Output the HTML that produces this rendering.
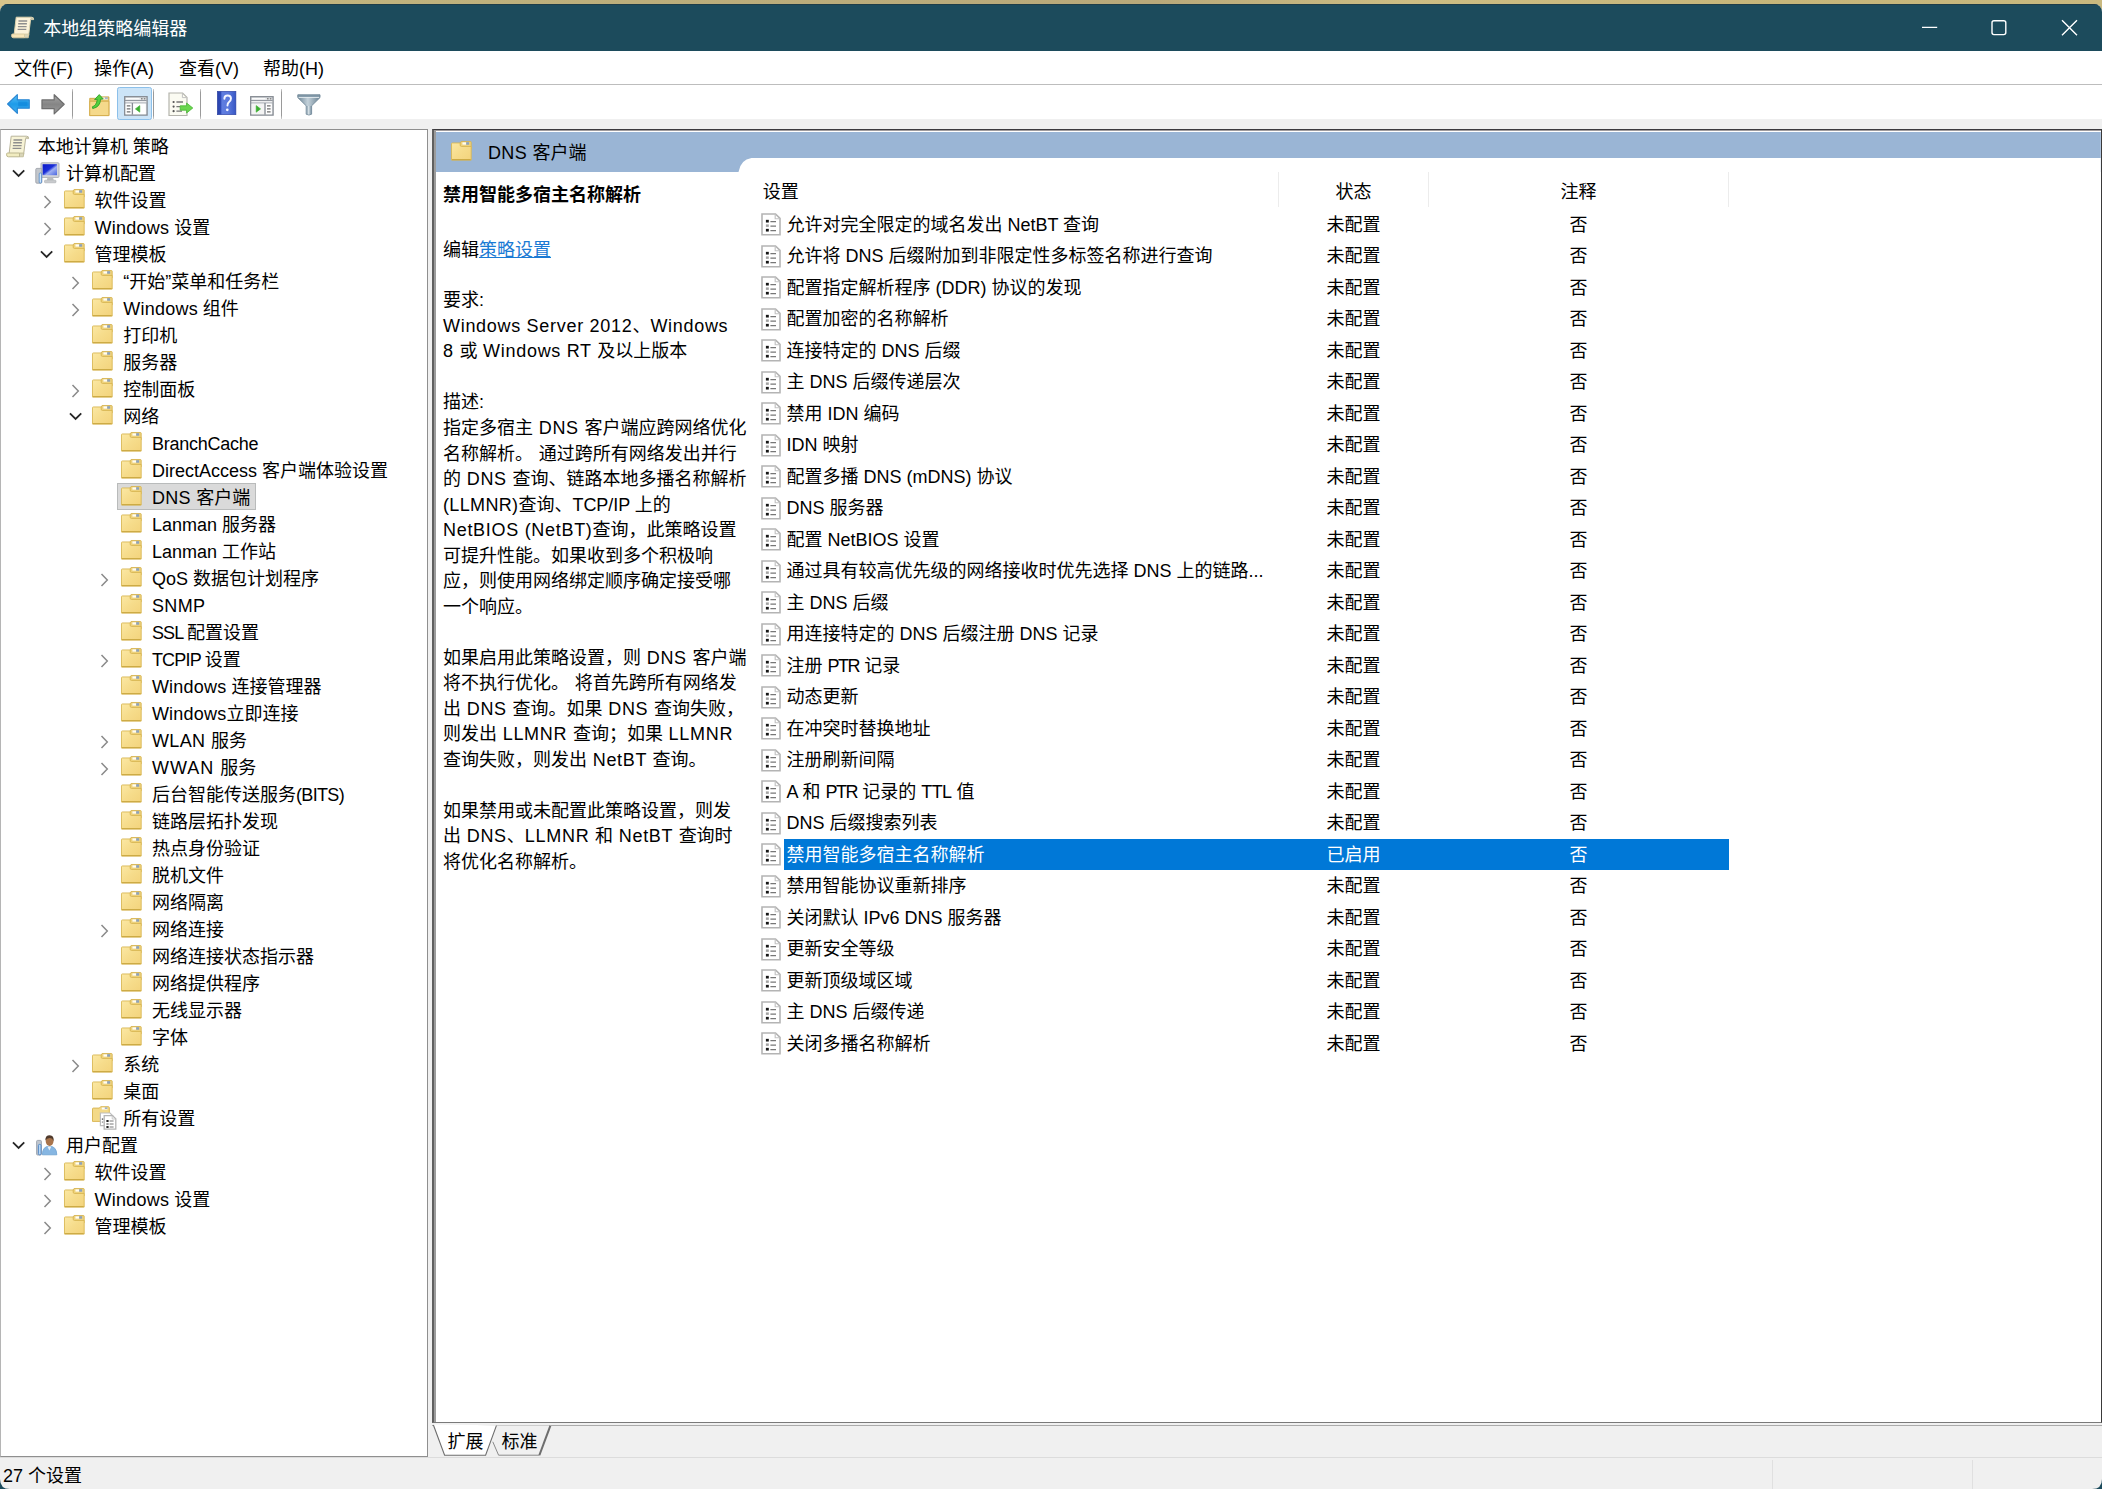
<!DOCTYPE html><html lang="zh-CN"><head><meta charset="utf-8"><title>本地组策略编辑器</title><style>
html,body{margin:0;padding:0}
body{width:2102px;height:1489px;overflow:hidden;position:relative;background:#1c4b5c;font-family:"Liberation Sans", "Noto Sans CJK SC", sans-serif;font-size:18px;color:#000}
div,svg{position:absolute}
.ic{overflow:visible}
#gold{left:0;top:0;width:2102px;height:14px;background:linear-gradient(90deg,#d8c58b 0%,#d6c489 4%,#c9b97f 8%,#c3b57e 14%,#bcae7b 30%,#b9a97a 55%,#cdbd83 67%,#c6b579 85%,#c9b97f 100%)}
#win{left:0;top:4px;width:2102px;height:1485px;background:#f0f0f0;border-radius:8px 8px 8px 8px;overflow:hidden}
#tb{left:0;top:0;width:2102px;height:47px;background:#1c4b5c;border-top:1px solid #1f3d48;box-sizing:border-box}
#title{left:43.2px;top:11.9px;line-height:27px;color:#fff;white-space:nowrap}
#menu{left:0;top:47px;width:2102px;height:33px;background:#fff}
.m{top:52.2px;line-height:27px;white-space:nowrap}
#mline{left:0;top:80px;width:2102px;height:1.4px;background:#bdbdbd}
#tool{left:0;top:81.4px;width:2102px;height:33.7px;background:#fff}
.sep{width:1.2px;background:linear-gradient(180deg,#cfcfcf 0,#9a9a9a 12%,#9a9a9a 88%,#cfcfcf 100%);top:85px;height:30.2px}
#treepane{left:0;top:125px;width:428.1px;height:1327.6px;background:#fff;border:1.3px solid #8f8f8f;box-sizing:border-box;border-left:1px solid #b5b5b5}
.t,.l,.d{white-space:nowrap;line-height:27px;height:27px}
.tsel{background:#dadada;border:1px solid #b9bbbb;box-sizing:border-box}
#rp{left:432px;top:128.8px;width:1670px;height:1294.6px;background:#fff;box-sizing:border-box;border-left:2px solid #606060;border-top:1.3px solid #3c3a3e;border-bottom:1.4px solid #7a7a7a;border-right:1.2px solid #3a3a3a}
#rpi{left:434px;top:130.1px;width:1666.8px;height:1291.9px;box-sizing:border-box;border-left:2px solid #9c9c9c;border-top:1.7px solid #a09c9e}
.lsel{background:#0078d7}
.w{color:#fff}
.c{text-align:center}
.b{font-weight:bold}
.ls{letter-spacing:0.7px}
.lnk{color:#1a7ad4;text-decoration:underline;text-decoration-thickness:1.4px;text-underline-offset:1.2px}
.hsep{width:1px;background:#ececec;top:172px;height:35px}
#status{left:0;top:1453px;width:2102px;height:32px;background:#f0f0f0;border-top:1px solid #dcdcdc;box-sizing:border-box}
.ssep{width:1px;background:#e0e0e0;top:1460px;height:30px}
</style></head><body>
<svg width="0" height="0" style="left:0;top:0"><defs><linearGradient id="fg" x1="0" y1="0" x2="1" y2="1"><stop offset="0" stop-color="#fbe8a4"/><stop offset="0.5" stop-color="#f6dc8b"/><stop offset="1" stop-color="#f3d37c"/></linearGradient></defs></svg>
<div id="gold"></div><div id="win">
<div id="tb"></div>
<svg class="ic" style="left:10.5px;top:11.6px" width="24" height="23" viewBox="0 0 24 23"><path d="M5.2 1.2 H20.5 Q23 1.2 22.6 3.6 H19.6 L17.6 19.5 H3 Z" fill="#fcf3da" stroke="#dcd2ad" stroke-width="1"/><path d="M19.8 1.4 Q22.8 1.4 22.4 4 H19.4Z" fill="#c9c5aa"/><path d="M7.5 5 H16.2 M7.2 7.8 H15.9 M6.9 10.6 H15.6 M6.6 13.4 H15.3" stroke="#8e8e8e" stroke-width="1.4"/><path d="M1.2 18 H13.5 V21.8 H2.4 Q0.6 21.8 0.6 19.9 Q0.6 18 1.2 18Z" fill="#f8e6b8" stroke="#d8caa0" stroke-width="1"/><path d="M13.5 18 H17.8 L17.3 21.8 H13.5Z" fill="#d8d4b8" stroke="#d8caa0" stroke-width="0.8"/></svg>
<div id="title">本地组策略编辑器</div>
<svg class="ic" style="left:1916px;top:10px" width="170" height="28" viewBox="0 0 170 28"><path d="M6 13.4 H21.2" stroke="#fff" stroke-width="1.3"/><rect x="76" y="6.8" width="13.8" height="13.8" rx="2" fill="none" stroke="#fff" stroke-width="1.4"/><path d="M146 6.2 L161 21.2 M161 6.2 L146 21.2" stroke="#fff" stroke-width="1.4"/></svg>
<div id="menu"></div><div id="mline"></div><div id="tool"></div>
<div class="m" style="left:14px">文件(F)</div>
<div class="m" style="left:94px">操作(A)</div>
<div class="m" style="left:179px">查看(V)</div>
<div class="m" style="left:263px">帮助(H)</div>
<svg class="ic" style="left:5.6px;top:89px" width="25.4" height="22" viewBox="0 0 27 24"><defs><linearGradient id="ba" x1="0" y1="0" x2="0" y2="1"><stop offset="0" stop-color="#5cc3f7"/><stop offset="0.5" stop-color="#1e9be9"/><stop offset="1" stop-color="#3fb0f1"/></linearGradient></defs><path d="M1.4 12 L12 1.8 V7.4 H25 V16.6 H12 V22.2Z" fill="url(#ba)" stroke="#2a86d3" stroke-width="1.3" stroke-linejoin="round"/><path d="M13 9.4 H23.2 V14.4 H13Z" fill="#0d7fd6" opacity="0.55"/></svg>
<svg class="ic" style="left:40.4px;top:88.6px" width="25.6" height="22.6" viewBox="0 0 27 24"><defs><linearGradient id="fa" x1="0" y1="0" x2="0" y2="1"><stop offset="0" stop-color="#a6a6a6"/><stop offset="0.5" stop-color="#858585"/><stop offset="1" stop-color="#9c9c9c"/></linearGradient></defs><path d="M25.6 12 L15 1.8 V7.4 H2 V16.6 H15 V22.2Z" fill="url(#fa)" stroke="#6e6e6e" stroke-width="1.3" stroke-linejoin="round"/></svg>
<div class="sep" style="left:72px"></div>
<svg class="ic" style="left:88.2px;top:89.9px" width="23.6" height="23" viewBox="0 0 24 24"><path d="M1.5 4.5 H10 L11.5 3 H21.5 V22.5 H1.5Z" fill="#e9c870" stroke="#cfa94a" stroke-width="1"/><rect x="14" y="3.6" width="6.4" height="2.2" fill="#f3f3f3"/><rect x="17.4" y="3.6" width="3" height="1.3" fill="#8c9cb8"/><path d="M1.5 7.5 H21.5 V22.5 H1.5Z" fill="#f5d98b" stroke="#d5ad4d" stroke-width="1"/><path d="M4.2 13.4 Q8.6 12 9.4 5.6 L6.6 5.8 L11.4 0.6 L15.6 5.2 L12.8 5.4 Q12.6 13.6 4.6 15.2Z" fill="#52cf3f" stroke="#2f9e26" stroke-width="0.9" stroke-linejoin="round"/></svg>
<div style="left:116.9px;top:83px;width:35px;height:32.5px;background:#cce4f7;border:1.3px solid #8cc0ea;border-radius:2.4px;box-sizing:border-box"></div>
<svg class="ic" style="left:123.5px;top:92px" width="24" height="20" viewBox="0 0 24 20"><rect x="0.7" y="0.7" width="22.4" height="18.4" fill="#e4e6e9" stroke="#858a92" stroke-width="1.3"/><path d="M2 2.7 H15.4" stroke="#fbfbfb" stroke-width="1.3"/><rect x="17" y="2" width="1.6" height="1.5" fill="#888"/><rect x="19.8" y="2" width="1.6" height="1.5" fill="#888"/><path d="M1 4.6 H22.6" stroke="#8b9099" stroke-width="1"/><path d="M1.6 5.8 H22.2" stroke="#f6f6f6" stroke-width="1"/><path d="M1 7 H22.6" stroke="#9a9fa8" stroke-width="0.9"/><rect x="1.6" y="7.6" width="6" height="10.6" fill="#fff"/><path d="M2.8 9.8 H6.4 M2.8 12.8 H6.4 M2.8 15.8 H6.4" stroke="#6f6f6f" stroke-width="1.2"/><rect x="9.2" y="7.6" width="12.6" height="10.6" fill="#fff"/><path d="M8.4 7 V18.6" stroke="#858a92" stroke-width="1.2"/><path d="M15.8 9.6 V16.2 L11.4 12.9Z" fill="#3cae31" stroke="#3cae31" stroke-width="0.6" stroke-linejoin="round"/></svg>
<div class="sep" style="left:152.8px"></div>
<svg class="ic" style="left:168px;top:87.5px" width="26" height="25" viewBox="0 0 26 25"><path d="M1 1 H14.6 L19 5.4 V23.5 H1Z" fill="#fbfbf2" stroke="#b4b4ac" stroke-width="1.2"/><path d="M14.4 1.2 V5.6 H18.8" fill="none" stroke="#c2c2c2" stroke-width="1"/><circle cx="5.6" cy="10" r="1.1" fill="#555"/><circle cx="5.6" cy="14.6" r="1.1" fill="#555"/><circle cx="5.6" cy="19.2" r="1.1" fill="#555"/><path d="M8.4 10 H15 M8.4 14.6 H12 M8.4 19.2 H14" stroke="#777" stroke-width="1.3"/><path d="M12.2 13.8 H18.6 V11 L24.8 16 L18.6 21 V18.2 H12.2Z" fill="#6ad64e" stroke="#48b534" stroke-width="0.8" stroke-linejoin="round"/></svg>
<div class="sep" style="left:200px"></div>
<svg class="ic" style="left:216.8px;top:87.2px" width="19.4" height="24" viewBox="0 0 20 24" preserveAspectRatio="none"><defs><linearGradient id="hb" x1="0" y1="0" x2="1" y2="0"><stop offset="0" stop-color="#2a43ad"/><stop offset="0.2" stop-color="#2f4bb8"/><stop offset="0.24" stop-color="#5f7de0"/><stop offset="0.6" stop-color="#5a78dc"/><stop offset="1" stop-color="#3656c4"/></linearGradient></defs><rect x="0.3" y="0.3" width="19.2" height="23.4" fill="url(#hb)" stroke="#2a3f9e" stroke-width="0.6"/><path d="M7.6 7.8 Q7.6 4.6 11 4.6 Q14.4 4.6 14.4 7.6 Q14.4 9.6 12.4 11 Q10.8 12.2 10.8 14.6" fill="none" stroke="#f4f6ff" stroke-width="2" stroke-linecap="round"/><circle cx="10.6" cy="18.8" r="1.4" fill="#f4f6ff"/></svg>
<svg class="ic" style="left:249.5px;top:92px" width="24" height="20" viewBox="0 0 24 20"><rect x="0.7" y="0.7" width="22.4" height="18.4" fill="#e4e6e9" stroke="#858a92" stroke-width="1.3"/><path d="M2 2.7 H15.4" stroke="#fbfbfb" stroke-width="1.3"/><rect x="17" y="2" width="1.6" height="1.5" fill="#888"/><rect x="19.8" y="2" width="1.6" height="1.5" fill="#888"/><path d="M1 4.6 H22.6" stroke="#8b9099" stroke-width="1"/><path d="M1.6 5.8 H22.2" stroke="#f6f6f6" stroke-width="1"/><path d="M1 7 H22.6" stroke="#9a9fa8" stroke-width="0.9"/><rect x="1.6" y="7.6" width="12.6" height="10.6" fill="#f4f4f4"/><rect x="15.8" y="7.6" width="6" height="10.6" fill="#fff"/><path d="M15 7 V18.6" stroke="#858a92" stroke-width="1.2"/><path d="M17 9.8 H20.6 M17 12.8 H20.6 M17 15.8 H20.6" stroke="#6f6f6f" stroke-width="1.2"/><path d="M6.2 9.6 V16.2 L10.6 12.9Z" fill="#3cae31" stroke="#3cae31" stroke-width="0.6" stroke-linejoin="round"/></svg>
<div class="sep" style="left:281px"></div>
<svg class="ic" style="left:297px;top:90px" width="24" height="22" viewBox="0 0 24 22"><defs><linearGradient id="fn" x1="0" y1="0" x2="1" y2="0"><stop offset="0" stop-color="#6f8797"/><stop offset="0.45" stop-color="#c3d1da"/><stop offset="1" stop-color="#6b8393"/></linearGradient><linearGradient id="fn2" x1="0" y1="0" x2="1" y2="0"><stop offset="0" stop-color="#8fa3b1"/><stop offset="0.4" stop-color="#dbe5ea"/><stop offset="1" stop-color="#8399a8"/></linearGradient></defs><path d="M0.8 0.8 H23 V3.6 L14.6 11.8 V20.2 Q12 21.8 9.2 20.2 V11.8 L0.8 3.6Z" fill="url(#fn)" stroke="#6e8696" stroke-width="0.9" stroke-linejoin="round"/><rect x="1.2" y="1" width="21.4" height="2.2" fill="#7d94a4"/><path d="M1.6 3.4 H22.2" stroke="#e3ebf0" stroke-width="1"/><rect x="10.2" y="12" width="3.6" height="8.4" fill="url(#fn2)"/></svg>
</div>
<div id="treepane" style="top:129px"></div>
<svg class="ic" style="left:6px;top:134.5px" width="24" height="23" viewBox="0 0 24 23"><path d="M5.2 1.2 H20.5 Q23 1.2 22.6 3.6 H19.6 L17.6 19.5 H3 Z" fill="#f7f3d6" stroke="#b9b49a" stroke-width="1"/><path d="M19.8 1.4 Q22.8 1.4 22.4 4 H19.4Z" fill="#c9c5aa"/><path d="M7.5 5 H16.2 M7.2 7.8 H15.9 M6.9 10.6 H15.6 M6.6 13.4 H15.3" stroke="#8e8e8e" stroke-width="1.4"/><path d="M1.2 18 H13.5 V21.8 H2.4 Q0.6 21.8 0.6 19.9 Q0.6 18 1.2 18Z" fill="#f1ecc0" stroke="#bdb78f" stroke-width="1"/><path d="M13.5 18 H17.8 L17.3 21.8 H13.5Z" fill="#d8d4b8" stroke="#bdb78f" stroke-width="0.8"/></svg>
<div class="t" style="left:37.8px;top:133.7px">本地计算机 策略</div>
<svg class="ic" style="left:11.8px;top:169.4px" width="13.2" height="8.5" viewBox="0 0 14 9"><path d="M1 1.5 L7 7.3 L13 1.5" fill="none" stroke="#262626" stroke-width="1.9"/></svg>
<svg class="ic" style="left:34.5px;top:162px" width="25" height="22" viewBox="0 0 25 22"><defs><linearGradient id="scr" x1="0" y1="0" x2="1" y2="1"><stop offset="0" stop-color="#0a18c8"/><stop offset="0.45" stop-color="#1b2fd8"/><stop offset="0.6" stop-color="#9fb0f2"/><stop offset="1" stop-color="#4a66e0"/></linearGradient></defs><rect x="6" y="0.8" width="18" height="14.6" rx="1" fill="#d4d6da" stroke="#aeb2b8" stroke-width="1"/><rect x="7.6" y="2.2" width="14.4" height="11" fill="url(#scr)"/><path d="M12.5 15.6 H18 L18.8 18.2 H11.7Z" fill="#b9bcc0"/><rect x="9.5" y="18.2" width="11.5" height="2.6" rx="0.8" fill="#c8cacd" stroke="#a9acb0" stroke-width="0.6"/><rect x="0.8" y="6.4" width="6" height="14.8" rx="1" fill="#c3c7cc" stroke="#9ea3aa" stroke-width="0.9"/><rect x="4.2" y="11" width="2.4" height="10" rx="1" fill="#cfe6fb" stroke="#4f88c8" stroke-width="0.8"/></svg>
<div class="t" style="left:66.0px;top:160.7px">计算机配置</div>
<svg class="ic" style="left:42.6px;top:194.8px" width="9" height="14" viewBox="0 0 9 14"><path d="M1.5 1 L7.3 7 L1.5 13" fill="none" stroke="#8a8a8a" stroke-width="1.5"/></svg>
<svg class="ic" style="left:63.5px;top:189.3px" width="20.7" height="19.6" viewBox="0 0 21 20" preserveAspectRatio="none"><path d="M9 2.4 L10.2 0.5 H19.7 Q20.5 0.5 20.5 1.3 V8 H9Z" fill="#eed27c" stroke="#d6b351" stroke-width="0.9"/><rect x="11.6" y="1.4" width="3.8" height="2.3" fill="#fffdf3"/><rect x="15.4" y="1.2" width="3" height="2.6" fill="#8da2bc"/><path d="M0.5 2.8 Q0.5 2 1.3 2 H9.3 V4.2 Q9.3 5.6 10.8 5.6 H20.5 V19.5 H0.5Z" fill="url(#fg)" stroke="#d8b653" stroke-width="0.9"/><path d="M1 19 H20" stroke="#cdab45" stroke-width="1.2"/></svg>
<div class="t" style="left:94.6px;top:187.7px">软件设置</div>
<svg class="ic" style="left:42.6px;top:221.8px" width="9" height="14" viewBox="0 0 9 14"><path d="M1.5 1 L7.3 7 L1.5 13" fill="none" stroke="#8a8a8a" stroke-width="1.5"/></svg>
<svg class="ic" style="left:63.5px;top:216.3px" width="20.7" height="19.6" viewBox="0 0 21 20" preserveAspectRatio="none"><path d="M9 2.4 L10.2 0.5 H19.7 Q20.5 0.5 20.5 1.3 V8 H9Z" fill="#eed27c" stroke="#d6b351" stroke-width="0.9"/><rect x="11.6" y="1.4" width="3.8" height="2.3" fill="#fffdf3"/><rect x="15.4" y="1.2" width="3" height="2.6" fill="#8da2bc"/><path d="M0.5 2.8 Q0.5 2 1.3 2 H9.3 V4.2 Q9.3 5.6 10.8 5.6 H20.5 V19.5 H0.5Z" fill="url(#fg)" stroke="#d8b653" stroke-width="0.9"/><path d="M1 19 H20" stroke="#cdab45" stroke-width="1.2"/></svg>
<div class="t" style="left:94.6px;top:214.7px"><span style="letter-spacing:0.22px">Windows</span> 设置</div>
<svg class="ic" style="left:40.4px;top:250.4px" width="13.2" height="8.5" viewBox="0 0 14 9"><path d="M1 1.5 L7 7.3 L13 1.5" fill="none" stroke="#262626" stroke-width="1.9"/></svg>
<svg class="ic" style="left:63.5px;top:243.3px" width="20.7" height="19.6" viewBox="0 0 21 20" preserveAspectRatio="none"><path d="M9 2.4 L10.2 0.5 H19.7 Q20.5 0.5 20.5 1.3 V8 H9Z" fill="#eed27c" stroke="#d6b351" stroke-width="0.9"/><rect x="11.6" y="1.4" width="3.8" height="2.3" fill="#fffdf3"/><rect x="15.4" y="1.2" width="3" height="2.6" fill="#8da2bc"/><path d="M0.5 2.8 Q0.5 2 1.3 2 H9.3 V4.2 Q9.3 5.6 10.8 5.6 H20.5 V19.5 H0.5Z" fill="url(#fg)" stroke="#d8b653" stroke-width="0.9"/><path d="M1 19 H20" stroke="#cdab45" stroke-width="1.2"/></svg>
<div class="t" style="left:94.6px;top:241.7px">管理模板</div>
<svg class="ic" style="left:71.3px;top:275.8px" width="9" height="14" viewBox="0 0 9 14"><path d="M1.5 1 L7.3 7 L1.5 13" fill="none" stroke="#8a8a8a" stroke-width="1.5"/></svg>
<svg class="ic" style="left:92.2px;top:270.3px" width="20.7" height="19.6" viewBox="0 0 21 20" preserveAspectRatio="none"><path d="M9 2.4 L10.2 0.5 H19.7 Q20.5 0.5 20.5 1.3 V8 H9Z" fill="#eed27c" stroke="#d6b351" stroke-width="0.9"/><rect x="11.6" y="1.4" width="3.8" height="2.3" fill="#fffdf3"/><rect x="15.4" y="1.2" width="3" height="2.6" fill="#8da2bc"/><path d="M0.5 2.8 Q0.5 2 1.3 2 H9.3 V4.2 Q9.3 5.6 10.8 5.6 H20.5 V19.5 H0.5Z" fill="url(#fg)" stroke="#d8b653" stroke-width="0.9"/><path d="M1 19 H20" stroke="#cdab45" stroke-width="1.2"/></svg>
<div class="t" style="left:123.3px;top:268.7px">“开始”菜单和任务栏</div>
<svg class="ic" style="left:71.3px;top:302.8px" width="9" height="14" viewBox="0 0 9 14"><path d="M1.5 1 L7.3 7 L1.5 13" fill="none" stroke="#8a8a8a" stroke-width="1.5"/></svg>
<svg class="ic" style="left:92.2px;top:297.3px" width="20.7" height="19.6" viewBox="0 0 21 20" preserveAspectRatio="none"><path d="M9 2.4 L10.2 0.5 H19.7 Q20.5 0.5 20.5 1.3 V8 H9Z" fill="#eed27c" stroke="#d6b351" stroke-width="0.9"/><rect x="11.6" y="1.4" width="3.8" height="2.3" fill="#fffdf3"/><rect x="15.4" y="1.2" width="3" height="2.6" fill="#8da2bc"/><path d="M0.5 2.8 Q0.5 2 1.3 2 H9.3 V4.2 Q9.3 5.6 10.8 5.6 H20.5 V19.5 H0.5Z" fill="url(#fg)" stroke="#d8b653" stroke-width="0.9"/><path d="M1 19 H20" stroke="#cdab45" stroke-width="1.2"/></svg>
<div class="t" style="left:123.3px;top:295.7px"><span style="letter-spacing:0.22px">Windows</span> 组件</div>
<svg class="ic" style="left:92.2px;top:324.3px" width="20.7" height="19.6" viewBox="0 0 21 20" preserveAspectRatio="none"><path d="M9 2.4 L10.2 0.5 H19.7 Q20.5 0.5 20.5 1.3 V8 H9Z" fill="#eed27c" stroke="#d6b351" stroke-width="0.9"/><rect x="11.6" y="1.4" width="3.8" height="2.3" fill="#fffdf3"/><rect x="15.4" y="1.2" width="3" height="2.6" fill="#8da2bc"/><path d="M0.5 2.8 Q0.5 2 1.3 2 H9.3 V4.2 Q9.3 5.6 10.8 5.6 H20.5 V19.5 H0.5Z" fill="url(#fg)" stroke="#d8b653" stroke-width="0.9"/><path d="M1 19 H20" stroke="#cdab45" stroke-width="1.2"/></svg>
<div class="t" style="left:123.3px;top:322.7px">打印机</div>
<svg class="ic" style="left:92.2px;top:351.3px" width="20.7" height="19.6" viewBox="0 0 21 20" preserveAspectRatio="none"><path d="M9 2.4 L10.2 0.5 H19.7 Q20.5 0.5 20.5 1.3 V8 H9Z" fill="#eed27c" stroke="#d6b351" stroke-width="0.9"/><rect x="11.6" y="1.4" width="3.8" height="2.3" fill="#fffdf3"/><rect x="15.4" y="1.2" width="3" height="2.6" fill="#8da2bc"/><path d="M0.5 2.8 Q0.5 2 1.3 2 H9.3 V4.2 Q9.3 5.6 10.8 5.6 H20.5 V19.5 H0.5Z" fill="url(#fg)" stroke="#d8b653" stroke-width="0.9"/><path d="M1 19 H20" stroke="#cdab45" stroke-width="1.2"/></svg>
<div class="t" style="left:123.3px;top:349.7px">服务器</div>
<svg class="ic" style="left:71.3px;top:383.8px" width="9" height="14" viewBox="0 0 9 14"><path d="M1.5 1 L7.3 7 L1.5 13" fill="none" stroke="#8a8a8a" stroke-width="1.5"/></svg>
<svg class="ic" style="left:92.2px;top:378.3px" width="20.7" height="19.6" viewBox="0 0 21 20" preserveAspectRatio="none"><path d="M9 2.4 L10.2 0.5 H19.7 Q20.5 0.5 20.5 1.3 V8 H9Z" fill="#eed27c" stroke="#d6b351" stroke-width="0.9"/><rect x="11.6" y="1.4" width="3.8" height="2.3" fill="#fffdf3"/><rect x="15.4" y="1.2" width="3" height="2.6" fill="#8da2bc"/><path d="M0.5 2.8 Q0.5 2 1.3 2 H9.3 V4.2 Q9.3 5.6 10.8 5.6 H20.5 V19.5 H0.5Z" fill="url(#fg)" stroke="#d8b653" stroke-width="0.9"/><path d="M1 19 H20" stroke="#cdab45" stroke-width="1.2"/></svg>
<div class="t" style="left:123.3px;top:376.7px">控制面板</div>
<svg class="ic" style="left:69.1px;top:412.4px" width="13.2" height="8.5" viewBox="0 0 14 9"><path d="M1 1.5 L7 7.3 L13 1.5" fill="none" stroke="#262626" stroke-width="1.9"/></svg>
<svg class="ic" style="left:92.2px;top:405.3px" width="20.7" height="19.6" viewBox="0 0 21 20" preserveAspectRatio="none"><path d="M9 2.4 L10.2 0.5 H19.7 Q20.5 0.5 20.5 1.3 V8 H9Z" fill="#eed27c" stroke="#d6b351" stroke-width="0.9"/><rect x="11.6" y="1.4" width="3.8" height="2.3" fill="#fffdf3"/><rect x="15.4" y="1.2" width="3" height="2.6" fill="#8da2bc"/><path d="M0.5 2.8 Q0.5 2 1.3 2 H9.3 V4.2 Q9.3 5.6 10.8 5.6 H20.5 V19.5 H0.5Z" fill="url(#fg)" stroke="#d8b653" stroke-width="0.9"/><path d="M1 19 H20" stroke="#cdab45" stroke-width="1.2"/></svg>
<div class="t" style="left:123.3px;top:403.7px">网络</div>
<svg class="ic" style="left:120.8px;top:432.3px" width="20.7" height="19.6" viewBox="0 0 21 20" preserveAspectRatio="none"><path d="M9 2.4 L10.2 0.5 H19.7 Q20.5 0.5 20.5 1.3 V8 H9Z" fill="#eed27c" stroke="#d6b351" stroke-width="0.9"/><rect x="11.6" y="1.4" width="3.8" height="2.3" fill="#fffdf3"/><rect x="15.4" y="1.2" width="3" height="2.6" fill="#8da2bc"/><path d="M0.5 2.8 Q0.5 2 1.3 2 H9.3 V4.2 Q9.3 5.6 10.8 5.6 H20.5 V19.5 H0.5Z" fill="url(#fg)" stroke="#d8b653" stroke-width="0.9"/><path d="M1 19 H20" stroke="#cdab45" stroke-width="1.2"/></svg>
<div class="t" style="left:151.9px;top:430.7px"><span style="letter-spacing:-0.25px">BranchCache</span></div>
<svg class="ic" style="left:120.8px;top:459.3px" width="20.7" height="19.6" viewBox="0 0 21 20" preserveAspectRatio="none"><path d="M9 2.4 L10.2 0.5 H19.7 Q20.5 0.5 20.5 1.3 V8 H9Z" fill="#eed27c" stroke="#d6b351" stroke-width="0.9"/><rect x="11.6" y="1.4" width="3.8" height="2.3" fill="#fffdf3"/><rect x="15.4" y="1.2" width="3" height="2.6" fill="#8da2bc"/><path d="M0.5 2.8 Q0.5 2 1.3 2 H9.3 V4.2 Q9.3 5.6 10.8 5.6 H20.5 V19.5 H0.5Z" fill="url(#fg)" stroke="#d8b653" stroke-width="0.9"/><path d="M1 19 H20" stroke="#cdab45" stroke-width="1.2"/></svg>
<div class="t" style="left:151.9px;top:457.7px">DirectAccess 客户端体验设置</div>
<div class="tsel" style="left:117.0px;top:483.1px;width:138.6px;height:26.6px"></div>
<svg class="ic" style="left:120.8px;top:486.3px" width="20.7" height="19.6" viewBox="0 0 21 20" preserveAspectRatio="none"><path d="M9 2.4 L10.2 0.5 H19.7 Q20.5 0.5 20.5 1.3 V8 H9Z" fill="#eed27c" stroke="#d6b351" stroke-width="0.9"/><rect x="11.6" y="1.4" width="3.8" height="2.3" fill="#fffdf3"/><rect x="15.4" y="1.2" width="3" height="2.6" fill="#8da2bc"/><path d="M0.5 2.8 Q0.5 2 1.3 2 H9.3 V4.2 Q9.3 5.6 10.8 5.6 H20.5 V19.5 H0.5Z" fill="url(#fg)" stroke="#d8b653" stroke-width="0.9"/><path d="M1 19 H20" stroke="#cdab45" stroke-width="1.2"/></svg>
<div class="t" style="left:151.9px;top:484.7px"><span style="letter-spacing:0.35px">DNS </span>客户端</div>
<svg class="ic" style="left:120.8px;top:513.3px" width="20.7" height="19.6" viewBox="0 0 21 20" preserveAspectRatio="none"><path d="M9 2.4 L10.2 0.5 H19.7 Q20.5 0.5 20.5 1.3 V8 H9Z" fill="#eed27c" stroke="#d6b351" stroke-width="0.9"/><rect x="11.6" y="1.4" width="3.8" height="2.3" fill="#fffdf3"/><rect x="15.4" y="1.2" width="3" height="2.6" fill="#8da2bc"/><path d="M0.5 2.8 Q0.5 2 1.3 2 H9.3 V4.2 Q9.3 5.6 10.8 5.6 H20.5 V19.5 H0.5Z" fill="url(#fg)" stroke="#d8b653" stroke-width="0.9"/><path d="M1 19 H20" stroke="#cdab45" stroke-width="1.2"/></svg>
<div class="t" style="left:151.9px;top:511.7px">Lanman 服务器</div>
<svg class="ic" style="left:120.8px;top:540.3px" width="20.7" height="19.6" viewBox="0 0 21 20" preserveAspectRatio="none"><path d="M9 2.4 L10.2 0.5 H19.7 Q20.5 0.5 20.5 1.3 V8 H9Z" fill="#eed27c" stroke="#d6b351" stroke-width="0.9"/><rect x="11.6" y="1.4" width="3.8" height="2.3" fill="#fffdf3"/><rect x="15.4" y="1.2" width="3" height="2.6" fill="#8da2bc"/><path d="M0.5 2.8 Q0.5 2 1.3 2 H9.3 V4.2 Q9.3 5.6 10.8 5.6 H20.5 V19.5 H0.5Z" fill="url(#fg)" stroke="#d8b653" stroke-width="0.9"/><path d="M1 19 H20" stroke="#cdab45" stroke-width="1.2"/></svg>
<div class="t" style="left:151.9px;top:538.7px">Lanman 工作站</div>
<svg class="ic" style="left:99.9px;top:572.8px" width="9" height="14" viewBox="0 0 9 14"><path d="M1.5 1 L7.3 7 L1.5 13" fill="none" stroke="#8a8a8a" stroke-width="1.5"/></svg>
<svg class="ic" style="left:120.8px;top:567.3px" width="20.7" height="19.6" viewBox="0 0 21 20" preserveAspectRatio="none"><path d="M9 2.4 L10.2 0.5 H19.7 Q20.5 0.5 20.5 1.3 V8 H9Z" fill="#eed27c" stroke="#d6b351" stroke-width="0.9"/><rect x="11.6" y="1.4" width="3.8" height="2.3" fill="#fffdf3"/><rect x="15.4" y="1.2" width="3" height="2.6" fill="#8da2bc"/><path d="M0.5 2.8 Q0.5 2 1.3 2 H9.3 V4.2 Q9.3 5.6 10.8 5.6 H20.5 V19.5 H0.5Z" fill="url(#fg)" stroke="#d8b653" stroke-width="0.9"/><path d="M1 19 H20" stroke="#cdab45" stroke-width="1.2"/></svg>
<div class="t" style="left:151.9px;top:565.7px">QoS 数据包计划程序</div>
<svg class="ic" style="left:120.8px;top:594.3px" width="20.7" height="19.6" viewBox="0 0 21 20" preserveAspectRatio="none"><path d="M9 2.4 L10.2 0.5 H19.7 Q20.5 0.5 20.5 1.3 V8 H9Z" fill="#eed27c" stroke="#d6b351" stroke-width="0.9"/><rect x="11.6" y="1.4" width="3.8" height="2.3" fill="#fffdf3"/><rect x="15.4" y="1.2" width="3" height="2.6" fill="#8da2bc"/><path d="M0.5 2.8 Q0.5 2 1.3 2 H9.3 V4.2 Q9.3 5.6 10.8 5.6 H20.5 V19.5 H0.5Z" fill="url(#fg)" stroke="#d8b653" stroke-width="0.9"/><path d="M1 19 H20" stroke="#cdab45" stroke-width="1.2"/></svg>
<div class="t" style="left:151.9px;top:592.7px"><span style="letter-spacing:0.4px">SNMP</span></div>
<svg class="ic" style="left:120.8px;top:621.3px" width="20.7" height="19.6" viewBox="0 0 21 20" preserveAspectRatio="none"><path d="M9 2.4 L10.2 0.5 H19.7 Q20.5 0.5 20.5 1.3 V8 H9Z" fill="#eed27c" stroke="#d6b351" stroke-width="0.9"/><rect x="11.6" y="1.4" width="3.8" height="2.3" fill="#fffdf3"/><rect x="15.4" y="1.2" width="3" height="2.6" fill="#8da2bc"/><path d="M0.5 2.8 Q0.5 2 1.3 2 H9.3 V4.2 Q9.3 5.6 10.8 5.6 H20.5 V19.5 H0.5Z" fill="url(#fg)" stroke="#d8b653" stroke-width="0.9"/><path d="M1 19 H20" stroke="#cdab45" stroke-width="1.2"/></svg>
<div class="t" style="left:151.9px;top:619.7px"><span style="letter-spacing:-0.8px">SSL </span>配置设置</div>
<svg class="ic" style="left:99.9px;top:653.8px" width="9" height="14" viewBox="0 0 9 14"><path d="M1.5 1 L7.3 7 L1.5 13" fill="none" stroke="#8a8a8a" stroke-width="1.5"/></svg>
<svg class="ic" style="left:120.8px;top:648.3px" width="20.7" height="19.6" viewBox="0 0 21 20" preserveAspectRatio="none"><path d="M9 2.4 L10.2 0.5 H19.7 Q20.5 0.5 20.5 1.3 V8 H9Z" fill="#eed27c" stroke="#d6b351" stroke-width="0.9"/><rect x="11.6" y="1.4" width="3.8" height="2.3" fill="#fffdf3"/><rect x="15.4" y="1.2" width="3" height="2.6" fill="#8da2bc"/><path d="M0.5 2.8 Q0.5 2 1.3 2 H9.3 V4.2 Q9.3 5.6 10.8 5.6 H20.5 V19.5 H0.5Z" fill="url(#fg)" stroke="#d8b653" stroke-width="0.9"/><path d="M1 19 H20" stroke="#cdab45" stroke-width="1.2"/></svg>
<div class="t" style="left:151.9px;top:646.7px"><span style="letter-spacing:-0.8px">TCPIP </span>设置</div>
<svg class="ic" style="left:120.8px;top:675.3px" width="20.7" height="19.6" viewBox="0 0 21 20" preserveAspectRatio="none"><path d="M9 2.4 L10.2 0.5 H19.7 Q20.5 0.5 20.5 1.3 V8 H9Z" fill="#eed27c" stroke="#d6b351" stroke-width="0.9"/><rect x="11.6" y="1.4" width="3.8" height="2.3" fill="#fffdf3"/><rect x="15.4" y="1.2" width="3" height="2.6" fill="#8da2bc"/><path d="M0.5 2.8 Q0.5 2 1.3 2 H9.3 V4.2 Q9.3 5.6 10.8 5.6 H20.5 V19.5 H0.5Z" fill="url(#fg)" stroke="#d8b653" stroke-width="0.9"/><path d="M1 19 H20" stroke="#cdab45" stroke-width="1.2"/></svg>
<div class="t" style="left:151.9px;top:673.7px"><span style="letter-spacing:0.22px">Windows</span> 连接管理器</div>
<svg class="ic" style="left:120.8px;top:702.3px" width="20.7" height="19.6" viewBox="0 0 21 20" preserveAspectRatio="none"><path d="M9 2.4 L10.2 0.5 H19.7 Q20.5 0.5 20.5 1.3 V8 H9Z" fill="#eed27c" stroke="#d6b351" stroke-width="0.9"/><rect x="11.6" y="1.4" width="3.8" height="2.3" fill="#fffdf3"/><rect x="15.4" y="1.2" width="3" height="2.6" fill="#8da2bc"/><path d="M0.5 2.8 Q0.5 2 1.3 2 H9.3 V4.2 Q9.3 5.6 10.8 5.6 H20.5 V19.5 H0.5Z" fill="url(#fg)" stroke="#d8b653" stroke-width="0.9"/><path d="M1 19 H20" stroke="#cdab45" stroke-width="1.2"/></svg>
<div class="t" style="left:151.9px;top:700.7px"><span style="letter-spacing:0.22px">Windows</span>立即连接</div>
<svg class="ic" style="left:99.9px;top:734.8px" width="9" height="14" viewBox="0 0 9 14"><path d="M1.5 1 L7.3 7 L1.5 13" fill="none" stroke="#8a8a8a" stroke-width="1.5"/></svg>
<svg class="ic" style="left:120.8px;top:729.3px" width="20.7" height="19.6" viewBox="0 0 21 20" preserveAspectRatio="none"><path d="M9 2.4 L10.2 0.5 H19.7 Q20.5 0.5 20.5 1.3 V8 H9Z" fill="#eed27c" stroke="#d6b351" stroke-width="0.9"/><rect x="11.6" y="1.4" width="3.8" height="2.3" fill="#fffdf3"/><rect x="15.4" y="1.2" width="3" height="2.6" fill="#8da2bc"/><path d="M0.5 2.8 Q0.5 2 1.3 2 H9.3 V4.2 Q9.3 5.6 10.8 5.6 H20.5 V19.5 H0.5Z" fill="url(#fg)" stroke="#d8b653" stroke-width="0.9"/><path d="M1 19 H20" stroke="#cdab45" stroke-width="1.2"/></svg>
<div class="t" style="left:151.9px;top:727.7px"><span style="letter-spacing:0.4px">WLAN </span>服务</div>
<svg class="ic" style="left:99.9px;top:761.8px" width="9" height="14" viewBox="0 0 9 14"><path d="M1.5 1 L7.3 7 L1.5 13" fill="none" stroke="#8a8a8a" stroke-width="1.5"/></svg>
<svg class="ic" style="left:120.8px;top:756.3px" width="20.7" height="19.6" viewBox="0 0 21 20" preserveAspectRatio="none"><path d="M9 2.4 L10.2 0.5 H19.7 Q20.5 0.5 20.5 1.3 V8 H9Z" fill="#eed27c" stroke="#d6b351" stroke-width="0.9"/><rect x="11.6" y="1.4" width="3.8" height="2.3" fill="#fffdf3"/><rect x="15.4" y="1.2" width="3" height="2.6" fill="#8da2bc"/><path d="M0.5 2.8 Q0.5 2 1.3 2 H9.3 V4.2 Q9.3 5.6 10.8 5.6 H20.5 V19.5 H0.5Z" fill="url(#fg)" stroke="#d8b653" stroke-width="0.9"/><path d="M1 19 H20" stroke="#cdab45" stroke-width="1.2"/></svg>
<div class="t" style="left:151.9px;top:754.7px"><span style="letter-spacing:1.0px">WWAN </span>服务</div>
<svg class="ic" style="left:120.8px;top:783.3px" width="20.7" height="19.6" viewBox="0 0 21 20" preserveAspectRatio="none"><path d="M9 2.4 L10.2 0.5 H19.7 Q20.5 0.5 20.5 1.3 V8 H9Z" fill="#eed27c" stroke="#d6b351" stroke-width="0.9"/><rect x="11.6" y="1.4" width="3.8" height="2.3" fill="#fffdf3"/><rect x="15.4" y="1.2" width="3" height="2.6" fill="#8da2bc"/><path d="M0.5 2.8 Q0.5 2 1.3 2 H9.3 V4.2 Q9.3 5.6 10.8 5.6 H20.5 V19.5 H0.5Z" fill="url(#fg)" stroke="#d8b653" stroke-width="0.9"/><path d="M1 19 H20" stroke="#cdab45" stroke-width="1.2"/></svg>
<div class="t" style="left:151.9px;top:781.7px">后台智能传送服务<span style="letter-spacing:-0.63px">(BITS)</span></div>
<svg class="ic" style="left:120.8px;top:810.3px" width="20.7" height="19.6" viewBox="0 0 21 20" preserveAspectRatio="none"><path d="M9 2.4 L10.2 0.5 H19.7 Q20.5 0.5 20.5 1.3 V8 H9Z" fill="#eed27c" stroke="#d6b351" stroke-width="0.9"/><rect x="11.6" y="1.4" width="3.8" height="2.3" fill="#fffdf3"/><rect x="15.4" y="1.2" width="3" height="2.6" fill="#8da2bc"/><path d="M0.5 2.8 Q0.5 2 1.3 2 H9.3 V4.2 Q9.3 5.6 10.8 5.6 H20.5 V19.5 H0.5Z" fill="url(#fg)" stroke="#d8b653" stroke-width="0.9"/><path d="M1 19 H20" stroke="#cdab45" stroke-width="1.2"/></svg>
<div class="t" style="left:151.9px;top:808.7px">链路层拓扑发现</div>
<svg class="ic" style="left:120.8px;top:837.3px" width="20.7" height="19.6" viewBox="0 0 21 20" preserveAspectRatio="none"><path d="M9 2.4 L10.2 0.5 H19.7 Q20.5 0.5 20.5 1.3 V8 H9Z" fill="#eed27c" stroke="#d6b351" stroke-width="0.9"/><rect x="11.6" y="1.4" width="3.8" height="2.3" fill="#fffdf3"/><rect x="15.4" y="1.2" width="3" height="2.6" fill="#8da2bc"/><path d="M0.5 2.8 Q0.5 2 1.3 2 H9.3 V4.2 Q9.3 5.6 10.8 5.6 H20.5 V19.5 H0.5Z" fill="url(#fg)" stroke="#d8b653" stroke-width="0.9"/><path d="M1 19 H20" stroke="#cdab45" stroke-width="1.2"/></svg>
<div class="t" style="left:151.9px;top:835.7px">热点身份验证</div>
<svg class="ic" style="left:120.8px;top:864.3px" width="20.7" height="19.6" viewBox="0 0 21 20" preserveAspectRatio="none"><path d="M9 2.4 L10.2 0.5 H19.7 Q20.5 0.5 20.5 1.3 V8 H9Z" fill="#eed27c" stroke="#d6b351" stroke-width="0.9"/><rect x="11.6" y="1.4" width="3.8" height="2.3" fill="#fffdf3"/><rect x="15.4" y="1.2" width="3" height="2.6" fill="#8da2bc"/><path d="M0.5 2.8 Q0.5 2 1.3 2 H9.3 V4.2 Q9.3 5.6 10.8 5.6 H20.5 V19.5 H0.5Z" fill="url(#fg)" stroke="#d8b653" stroke-width="0.9"/><path d="M1 19 H20" stroke="#cdab45" stroke-width="1.2"/></svg>
<div class="t" style="left:151.9px;top:862.7px">脱机文件</div>
<svg class="ic" style="left:120.8px;top:891.3px" width="20.7" height="19.6" viewBox="0 0 21 20" preserveAspectRatio="none"><path d="M9 2.4 L10.2 0.5 H19.7 Q20.5 0.5 20.5 1.3 V8 H9Z" fill="#eed27c" stroke="#d6b351" stroke-width="0.9"/><rect x="11.6" y="1.4" width="3.8" height="2.3" fill="#fffdf3"/><rect x="15.4" y="1.2" width="3" height="2.6" fill="#8da2bc"/><path d="M0.5 2.8 Q0.5 2 1.3 2 H9.3 V4.2 Q9.3 5.6 10.8 5.6 H20.5 V19.5 H0.5Z" fill="url(#fg)" stroke="#d8b653" stroke-width="0.9"/><path d="M1 19 H20" stroke="#cdab45" stroke-width="1.2"/></svg>
<div class="t" style="left:151.9px;top:889.7px">网络隔离</div>
<svg class="ic" style="left:99.9px;top:923.8px" width="9" height="14" viewBox="0 0 9 14"><path d="M1.5 1 L7.3 7 L1.5 13" fill="none" stroke="#8a8a8a" stroke-width="1.5"/></svg>
<svg class="ic" style="left:120.8px;top:918.3px" width="20.7" height="19.6" viewBox="0 0 21 20" preserveAspectRatio="none"><path d="M9 2.4 L10.2 0.5 H19.7 Q20.5 0.5 20.5 1.3 V8 H9Z" fill="#eed27c" stroke="#d6b351" stroke-width="0.9"/><rect x="11.6" y="1.4" width="3.8" height="2.3" fill="#fffdf3"/><rect x="15.4" y="1.2" width="3" height="2.6" fill="#8da2bc"/><path d="M0.5 2.8 Q0.5 2 1.3 2 H9.3 V4.2 Q9.3 5.6 10.8 5.6 H20.5 V19.5 H0.5Z" fill="url(#fg)" stroke="#d8b653" stroke-width="0.9"/><path d="M1 19 H20" stroke="#cdab45" stroke-width="1.2"/></svg>
<div class="t" style="left:151.9px;top:916.7px">网络连接</div>
<svg class="ic" style="left:120.8px;top:945.3px" width="20.7" height="19.6" viewBox="0 0 21 20" preserveAspectRatio="none"><path d="M9 2.4 L10.2 0.5 H19.7 Q20.5 0.5 20.5 1.3 V8 H9Z" fill="#eed27c" stroke="#d6b351" stroke-width="0.9"/><rect x="11.6" y="1.4" width="3.8" height="2.3" fill="#fffdf3"/><rect x="15.4" y="1.2" width="3" height="2.6" fill="#8da2bc"/><path d="M0.5 2.8 Q0.5 2 1.3 2 H9.3 V4.2 Q9.3 5.6 10.8 5.6 H20.5 V19.5 H0.5Z" fill="url(#fg)" stroke="#d8b653" stroke-width="0.9"/><path d="M1 19 H20" stroke="#cdab45" stroke-width="1.2"/></svg>
<div class="t" style="left:151.9px;top:943.7px">网络连接状态指示器</div>
<svg class="ic" style="left:120.8px;top:972.3px" width="20.7" height="19.6" viewBox="0 0 21 20" preserveAspectRatio="none"><path d="M9 2.4 L10.2 0.5 H19.7 Q20.5 0.5 20.5 1.3 V8 H9Z" fill="#eed27c" stroke="#d6b351" stroke-width="0.9"/><rect x="11.6" y="1.4" width="3.8" height="2.3" fill="#fffdf3"/><rect x="15.4" y="1.2" width="3" height="2.6" fill="#8da2bc"/><path d="M0.5 2.8 Q0.5 2 1.3 2 H9.3 V4.2 Q9.3 5.6 10.8 5.6 H20.5 V19.5 H0.5Z" fill="url(#fg)" stroke="#d8b653" stroke-width="0.9"/><path d="M1 19 H20" stroke="#cdab45" stroke-width="1.2"/></svg>
<div class="t" style="left:151.9px;top:970.7px">网络提供程序</div>
<svg class="ic" style="left:120.8px;top:999.3px" width="20.7" height="19.6" viewBox="0 0 21 20" preserveAspectRatio="none"><path d="M9 2.4 L10.2 0.5 H19.7 Q20.5 0.5 20.5 1.3 V8 H9Z" fill="#eed27c" stroke="#d6b351" stroke-width="0.9"/><rect x="11.6" y="1.4" width="3.8" height="2.3" fill="#fffdf3"/><rect x="15.4" y="1.2" width="3" height="2.6" fill="#8da2bc"/><path d="M0.5 2.8 Q0.5 2 1.3 2 H9.3 V4.2 Q9.3 5.6 10.8 5.6 H20.5 V19.5 H0.5Z" fill="url(#fg)" stroke="#d8b653" stroke-width="0.9"/><path d="M1 19 H20" stroke="#cdab45" stroke-width="1.2"/></svg>
<div class="t" style="left:151.9px;top:997.7px">无线显示器</div>
<svg class="ic" style="left:120.8px;top:1026.3px" width="20.7" height="19.6" viewBox="0 0 21 20" preserveAspectRatio="none"><path d="M9 2.4 L10.2 0.5 H19.7 Q20.5 0.5 20.5 1.3 V8 H9Z" fill="#eed27c" stroke="#d6b351" stroke-width="0.9"/><rect x="11.6" y="1.4" width="3.8" height="2.3" fill="#fffdf3"/><rect x="15.4" y="1.2" width="3" height="2.6" fill="#8da2bc"/><path d="M0.5 2.8 Q0.5 2 1.3 2 H9.3 V4.2 Q9.3 5.6 10.8 5.6 H20.5 V19.5 H0.5Z" fill="url(#fg)" stroke="#d8b653" stroke-width="0.9"/><path d="M1 19 H20" stroke="#cdab45" stroke-width="1.2"/></svg>
<div class="t" style="left:151.9px;top:1024.7px">字体</div>
<svg class="ic" style="left:71.3px;top:1058.8px" width="9" height="14" viewBox="0 0 9 14"><path d="M1.5 1 L7.3 7 L1.5 13" fill="none" stroke="#8a8a8a" stroke-width="1.5"/></svg>
<svg class="ic" style="left:92.2px;top:1053.3px" width="20.7" height="19.6" viewBox="0 0 21 20" preserveAspectRatio="none"><path d="M9 2.4 L10.2 0.5 H19.7 Q20.5 0.5 20.5 1.3 V8 H9Z" fill="#eed27c" stroke="#d6b351" stroke-width="0.9"/><rect x="11.6" y="1.4" width="3.8" height="2.3" fill="#fffdf3"/><rect x="15.4" y="1.2" width="3" height="2.6" fill="#8da2bc"/><path d="M0.5 2.8 Q0.5 2 1.3 2 H9.3 V4.2 Q9.3 5.6 10.8 5.6 H20.5 V19.5 H0.5Z" fill="url(#fg)" stroke="#d8b653" stroke-width="0.9"/><path d="M1 19 H20" stroke="#cdab45" stroke-width="1.2"/></svg>
<div class="t" style="left:123.3px;top:1051.7px">系统</div>
<svg class="ic" style="left:92.2px;top:1080.3px" width="20.7" height="19.6" viewBox="0 0 21 20" preserveAspectRatio="none"><path d="M9 2.4 L10.2 0.5 H19.7 Q20.5 0.5 20.5 1.3 V8 H9Z" fill="#eed27c" stroke="#d6b351" stroke-width="0.9"/><rect x="11.6" y="1.4" width="3.8" height="2.3" fill="#fffdf3"/><rect x="15.4" y="1.2" width="3" height="2.6" fill="#8da2bc"/><path d="M0.5 2.8 Q0.5 2 1.3 2 H9.3 V4.2 Q9.3 5.6 10.8 5.6 H20.5 V19.5 H0.5Z" fill="url(#fg)" stroke="#d8b653" stroke-width="0.9"/><path d="M1 19 H20" stroke="#cdab45" stroke-width="1.2"/></svg>
<div class="t" style="left:123.3px;top:1078.7px">桌面</div>
<svg class="ic" style="left:92.0px;top:1105px" width="25" height="25" viewBox="0 0 25 25"><path d="M0.5 3.9 Q0.5 3.1 1.3 3.1 H7.4 L8.6 1.7 H16.4 Q17.3 1.7 17.3 2.6 V16.4 H0.5Z" fill="#f3d988" stroke="#dab858" stroke-width="1"/><rect x="9.8" y="2.5" width="5.6" height="2" fill="#fdfdfd"/><rect x="12.8" y="2.5" width="2.6" height="1.2" fill="#7d93ad"/><path d="M8.4 8 H18 L21 11 V20.6 H8.4Z" fill="#fff" stroke="#bdbdbd" stroke-width="1.2"/><path d="M12.2 10.6 H20.4 L23.8 13.8 V24.2 H12.2Z" fill="#fff" stroke="#b4b4b4" stroke-width="1.3"/><path d="M20.2 10.8 V14 H23.6" fill="none" stroke="#c4c4c4" stroke-width="0.9"/><rect x="14.4" y="15" width="2.2" height="2" fill="#222"/><rect x="14.4" y="18" width="2.2" height="2" fill="#999"/><rect x="14.4" y="21" width="2.2" height="2" fill="#222"/><path d="M17.6 16 H21.6 M17.6 19 H21.6 M17.6 22 H21.6" stroke="#777" stroke-width="1"/><rect x="9.8" y="13.4" width="1.4" height="1.4" fill="#555"/><rect x="9.8" y="16.4" width="1.4" height="1.4" fill="#999"/></svg>
<div class="t" style="left:123.3px;top:1105.7px">所有设置</div>
<svg class="ic" style="left:11.8px;top:1141.4px" width="13.2" height="8.5" viewBox="0 0 14 9"><path d="M1 1.5 L7 7.3 L13 1.5" fill="none" stroke="#262626" stroke-width="1.9"/></svg>
<svg class="ic" style="left:35.0px;top:1133px" width="24" height="23" viewBox="0 0 24 23"><path d="M7.4 21.8 Q7.4 13.2 14.4 13.2 Q21.6 13.2 21.8 21.8Z" fill="#86b6e2" stroke="#6a9fd0" stroke-width="0.8"/><path d="M12.4 13.6 L14.4 17.6 L16.4 13.6Z" fill="#e9f1f9"/><ellipse cx="14.6" cy="8" rx="3.9" ry="4.9" fill="#a9744b"/><path d="M10.4 7.6 Q10 2.2 14.8 2.2 Q19.2 2.2 18.6 8.4 Q17.6 5 14.6 5 Q11.6 5 10.4 7.6Z" fill="#4f3a2c"/><rect x="1.6" y="7.4" width="4.8" height="14.6" rx="1" fill="#bfc6cf" stroke="#98a0ab" stroke-width="0.9"/><rect x="3.4" y="11.4" width="2.6" height="10.4" rx="1.1" fill="#b9d9f6" stroke="#4a82c4" stroke-width="0.9"/></svg>
<div class="t" style="left:66.0px;top:1132.7px">用户配置</div>
<svg class="ic" style="left:42.6px;top:1166.8px" width="9" height="14" viewBox="0 0 9 14"><path d="M1.5 1 L7.3 7 L1.5 13" fill="none" stroke="#8a8a8a" stroke-width="1.5"/></svg>
<svg class="ic" style="left:63.5px;top:1161.3px" width="20.7" height="19.6" viewBox="0 0 21 20" preserveAspectRatio="none"><path d="M9 2.4 L10.2 0.5 H19.7 Q20.5 0.5 20.5 1.3 V8 H9Z" fill="#eed27c" stroke="#d6b351" stroke-width="0.9"/><rect x="11.6" y="1.4" width="3.8" height="2.3" fill="#fffdf3"/><rect x="15.4" y="1.2" width="3" height="2.6" fill="#8da2bc"/><path d="M0.5 2.8 Q0.5 2 1.3 2 H9.3 V4.2 Q9.3 5.6 10.8 5.6 H20.5 V19.5 H0.5Z" fill="url(#fg)" stroke="#d8b653" stroke-width="0.9"/><path d="M1 19 H20" stroke="#cdab45" stroke-width="1.2"/></svg>
<div class="t" style="left:94.6px;top:1159.7px">软件设置</div>
<svg class="ic" style="left:42.6px;top:1193.8px" width="9" height="14" viewBox="0 0 9 14"><path d="M1.5 1 L7.3 7 L1.5 13" fill="none" stroke="#8a8a8a" stroke-width="1.5"/></svg>
<svg class="ic" style="left:63.5px;top:1188.3px" width="20.7" height="19.6" viewBox="0 0 21 20" preserveAspectRatio="none"><path d="M9 2.4 L10.2 0.5 H19.7 Q20.5 0.5 20.5 1.3 V8 H9Z" fill="#eed27c" stroke="#d6b351" stroke-width="0.9"/><rect x="11.6" y="1.4" width="3.8" height="2.3" fill="#fffdf3"/><rect x="15.4" y="1.2" width="3" height="2.6" fill="#8da2bc"/><path d="M0.5 2.8 Q0.5 2 1.3 2 H9.3 V4.2 Q9.3 5.6 10.8 5.6 H20.5 V19.5 H0.5Z" fill="url(#fg)" stroke="#d8b653" stroke-width="0.9"/><path d="M1 19 H20" stroke="#cdab45" stroke-width="1.2"/></svg>
<div class="t" style="left:94.6px;top:1186.7px"><span style="letter-spacing:0.22px">Windows</span> 设置</div>
<svg class="ic" style="left:42.6px;top:1220.8px" width="9" height="14" viewBox="0 0 9 14"><path d="M1.5 1 L7.3 7 L1.5 13" fill="none" stroke="#8a8a8a" stroke-width="1.5"/></svg>
<svg class="ic" style="left:63.5px;top:1215.3px" width="20.7" height="19.6" viewBox="0 0 21 20" preserveAspectRatio="none"><path d="M9 2.4 L10.2 0.5 H19.7 Q20.5 0.5 20.5 1.3 V8 H9Z" fill="#eed27c" stroke="#d6b351" stroke-width="0.9"/><rect x="11.6" y="1.4" width="3.8" height="2.3" fill="#fffdf3"/><rect x="15.4" y="1.2" width="3" height="2.6" fill="#8da2bc"/><path d="M0.5 2.8 Q0.5 2 1.3 2 H9.3 V4.2 Q9.3 5.6 10.8 5.6 H20.5 V19.5 H0.5Z" fill="url(#fg)" stroke="#d8b653" stroke-width="0.9"/><path d="M1 19 H20" stroke="#cdab45" stroke-width="1.2"/></svg>
<div class="t" style="left:94.6px;top:1213.7px">管理模板</div>
<div id="rp"></div><div id="rpi"></div>
<svg class="ic" style="left:436px;top:131.8px" width="1664.8" height="42" viewBox="0 0 1664.8 42" preserveAspectRatio="none"><rect x="0" y="0" width="1664.8" height="40" fill="#9ab5d5"/><path d="M0 40 H302.5 Q304.5 27.6 315.5 26 H1664.8 V42 H0Z" fill="#fff"/></svg>
<svg class="ic" style="left:450.8px;top:140.6px" width="20.7" height="19.6" viewBox="0 0 21 20" preserveAspectRatio="none"><path d="M9 2.4 L10.2 0.5 H19.7 Q20.5 0.5 20.5 1.3 V8 H9Z" fill="#eed27c" stroke="#d6b351" stroke-width="0.9"/><rect x="11.6" y="1.4" width="3.8" height="2.3" fill="#fffdf3"/><rect x="15.4" y="1.2" width="3" height="2.6" fill="#8da2bc"/><path d="M0.5 2.8 Q0.5 2 1.3 2 H9.3 V4.2 Q9.3 5.6 10.8 5.6 H20.5 V19.5 H0.5Z" fill="url(#fg)" stroke="#d8b653" stroke-width="0.9"/><path d="M1 19 H20" stroke="#cdab45" stroke-width="1.2"/></svg>
<div class="t" style="left:488px;top:140.2px"><span style="letter-spacing:0.35px">DNS </span>客户端</div>
<div class="l" style="left:762.8px;top:179.3px">设置</div>
<div class="l c" style="left:1279px;width:149px;top:179.3px">状态</div>
<div class="l c" style="left:1429px;width:299px;top:179.3px">注释</div>
<div class="hsep" style="left:1278px"></div>
<div class="hsep" style="left:1428px"></div>
<div class="hsep" style="left:1728px"></div>
<div class="d b" style="left:443px;top:182.1px">禁用智能多宿主名称解析</div>
<div class="d" style="left:443px;top:237.1px">编辑<span class="lnk">策略设置</span></div>
<div class="d" style="left:443px;top:287.1px">要求<span class="ls">:</span></div>
<div class="d" style="left:443px;top:312.6px"><span class="ls">Windows Server 2012</span>、<span class="ls">Windows</span></div>
<div class="d" style="left:443px;top:338.1px"><span class="ls">8 </span>或<span class="ls"> Windows RT </span>及以上版本</div>
<div class="d" style="left:443px;top:389.1px">描述<span class="ls">:</span></div>
<div class="d" style="left:443px;top:415.1px">指定多宿主<span class="ls"> DNS </span>客户端应跨网络优化</div>
<div class="d" style="left:443px;top:440.6px">名称解析。<span class="ls"> </span>通过跨所有网络发出并行</div>
<div class="d" style="left:443px;top:466.1px">的<span class="ls"> DNS </span>查询、链路本地多播名称解析</div>
<div class="d" style="left:443px;top:491.6px"><span style="letter-spacing:0.35px">(LLMNR)</span>查询、<span style="letter-spacing:-0.05px">TCP/IP </span>上的</div>
<div class="d" style="left:443px;top:517.1px"><span class="ls">NetBIOS (NetBT)</span>查询，此策略设置</div>
<div class="d" style="left:443px;top:542.6px">可提升性能。如果收到多个积极响</div>
<div class="d" style="left:443px;top:568.1px">应，则使用网络绑定顺序确定接受哪</div>
<div class="d" style="left:443px;top:593.6px">一个响应。</div>
<div class="d" style="left:443px;top:644.6px">如果启用此策略设置，则<span class="ls"> DNS </span>客户端</div>
<div class="d" style="left:443px;top:670.1px">将不执行优化。<span class="ls"> </span>将首先跨所有网络发</div>
<div class="d" style="left:443px;top:695.6px">出<span class="ls"> DNS </span>查询。如果<span class="ls"> DNS </span>查询失败，</div>
<div class="d" style="left:443px;top:721.1px">则发出<span class="ls"> LLMNR </span>查询；如果<span class="ls"> LLMNR</span></div>
<div class="d" style="left:443px;top:746.6px">查询失败，则发出<span class="ls"> NetBT </span>查询。</div>
<div class="d" style="left:443px;top:797.6px">如果禁用或未配置此策略设置，则发</div>
<div class="d" style="left:443px;top:823.1px">出<span class="ls"> DNS</span>、<span class="ls">LLMNR </span>和<span class="ls"> NetBT </span>查询时</div>
<div class="d" style="left:443px;top:848.6px">将优化名称解析。</div>
<svg class="ic" style="left:761px;top:213.0px" width="20" height="22.8" viewBox="0 0 20 23" preserveAspectRatio="none"><path d="M1 1 H14.5 L19 5.5 V22 H1Z" fill="#fff" stroke="#b4b4b4" stroke-width="1.6"/><path d="M14.2 1.2 V5.8 H18.8" fill="none" stroke="#c4c4c4" stroke-width="1.2"/><rect x="4.9" y="6.9" width="2.9" height="2.7" fill="#151515"/><rect x="4.9" y="11.5" width="2.9" height="2.5" fill="#a2a2a2"/><rect x="4.9" y="16" width="2.9" height="2.7" fill="#151515"/><path d="M9.4 8.6 H15 M9.4 13.2 H15 M9.4 17.8 H15" stroke="#777" stroke-width="1.3"/></svg>
<div class="l" style="left:786.4px;top:212px">允许对完全限定的域名发出 NetBT 查询</div>
<div class="l c" style="left:1279px;width:149px;top:212px">未配置</div>
<div class="l c" style="left:1429px;width:299px;top:212px">否</div>
<svg class="ic" style="left:761px;top:244.5px" width="20" height="22.8" viewBox="0 0 20 23" preserveAspectRatio="none"><path d="M1 1 H14.5 L19 5.5 V22 H1Z" fill="#fff" stroke="#b4b4b4" stroke-width="1.6"/><path d="M14.2 1.2 V5.8 H18.8" fill="none" stroke="#c4c4c4" stroke-width="1.2"/><rect x="4.9" y="6.9" width="2.9" height="2.7" fill="#151515"/><rect x="4.9" y="11.5" width="2.9" height="2.5" fill="#a2a2a2"/><rect x="4.9" y="16" width="2.9" height="2.7" fill="#151515"/><path d="M9.4 8.6 H15 M9.4 13.2 H15 M9.4 17.8 H15" stroke="#777" stroke-width="1.3"/></svg>
<div class="l" style="left:786.4px;top:243px">允许将 DNS 后缀附加到非限定性多标签名称进行查询</div>
<div class="l c" style="left:1279px;width:149px;top:243px">未配置</div>
<div class="l c" style="left:1429px;width:299px;top:243px">否</div>
<svg class="ic" style="left:761px;top:276.0px" width="20" height="22.8" viewBox="0 0 20 23" preserveAspectRatio="none"><path d="M1 1 H14.5 L19 5.5 V22 H1Z" fill="#fff" stroke="#b4b4b4" stroke-width="1.6"/><path d="M14.2 1.2 V5.8 H18.8" fill="none" stroke="#c4c4c4" stroke-width="1.2"/><rect x="4.9" y="6.9" width="2.9" height="2.7" fill="#151515"/><rect x="4.9" y="11.5" width="2.9" height="2.5" fill="#a2a2a2"/><rect x="4.9" y="16" width="2.9" height="2.7" fill="#151515"/><path d="M9.4 8.6 H15 M9.4 13.2 H15 M9.4 17.8 H15" stroke="#777" stroke-width="1.3"/></svg>
<div class="l" style="left:786.4px;top:275px">配置指定解析程序 (DDR) 协议的发现</div>
<div class="l c" style="left:1279px;width:149px;top:275px">未配置</div>
<div class="l c" style="left:1429px;width:299px;top:275px">否</div>
<svg class="ic" style="left:761px;top:307.5px" width="20" height="22.8" viewBox="0 0 20 23" preserveAspectRatio="none"><path d="M1 1 H14.5 L19 5.5 V22 H1Z" fill="#fff" stroke="#b4b4b4" stroke-width="1.6"/><path d="M14.2 1.2 V5.8 H18.8" fill="none" stroke="#c4c4c4" stroke-width="1.2"/><rect x="4.9" y="6.9" width="2.9" height="2.7" fill="#151515"/><rect x="4.9" y="11.5" width="2.9" height="2.5" fill="#a2a2a2"/><rect x="4.9" y="16" width="2.9" height="2.7" fill="#151515"/><path d="M9.4 8.6 H15 M9.4 13.2 H15 M9.4 17.8 H15" stroke="#777" stroke-width="1.3"/></svg>
<div class="l" style="left:786.4px;top:306px">配置加密的名称解析</div>
<div class="l c" style="left:1279px;width:149px;top:306px">未配置</div>
<div class="l c" style="left:1429px;width:299px;top:306px">否</div>
<svg class="ic" style="left:761px;top:339.0px" width="20" height="22.8" viewBox="0 0 20 23" preserveAspectRatio="none"><path d="M1 1 H14.5 L19 5.5 V22 H1Z" fill="#fff" stroke="#b4b4b4" stroke-width="1.6"/><path d="M14.2 1.2 V5.8 H18.8" fill="none" stroke="#c4c4c4" stroke-width="1.2"/><rect x="4.9" y="6.9" width="2.9" height="2.7" fill="#151515"/><rect x="4.9" y="11.5" width="2.9" height="2.5" fill="#a2a2a2"/><rect x="4.9" y="16" width="2.9" height="2.7" fill="#151515"/><path d="M9.4 8.6 H15 M9.4 13.2 H15 M9.4 17.8 H15" stroke="#777" stroke-width="1.3"/></svg>
<div class="l" style="left:786.4px;top:338px">连接特定的 DNS 后缀</div>
<div class="l c" style="left:1279px;width:149px;top:338px">未配置</div>
<div class="l c" style="left:1429px;width:299px;top:338px">否</div>
<svg class="ic" style="left:761px;top:370.5px" width="20" height="22.8" viewBox="0 0 20 23" preserveAspectRatio="none"><path d="M1 1 H14.5 L19 5.5 V22 H1Z" fill="#fff" stroke="#b4b4b4" stroke-width="1.6"/><path d="M14.2 1.2 V5.8 H18.8" fill="none" stroke="#c4c4c4" stroke-width="1.2"/><rect x="4.9" y="6.9" width="2.9" height="2.7" fill="#151515"/><rect x="4.9" y="11.5" width="2.9" height="2.5" fill="#a2a2a2"/><rect x="4.9" y="16" width="2.9" height="2.7" fill="#151515"/><path d="M9.4 8.6 H15 M9.4 13.2 H15 M9.4 17.8 H15" stroke="#777" stroke-width="1.3"/></svg>
<div class="l" style="left:786.4px;top:369px">主 DNS 后缀传递层次</div>
<div class="l c" style="left:1279px;width:149px;top:369px">未配置</div>
<div class="l c" style="left:1429px;width:299px;top:369px">否</div>
<svg class="ic" style="left:761px;top:402.0px" width="20" height="22.8" viewBox="0 0 20 23" preserveAspectRatio="none"><path d="M1 1 H14.5 L19 5.5 V22 H1Z" fill="#fff" stroke="#b4b4b4" stroke-width="1.6"/><path d="M14.2 1.2 V5.8 H18.8" fill="none" stroke="#c4c4c4" stroke-width="1.2"/><rect x="4.9" y="6.9" width="2.9" height="2.7" fill="#151515"/><rect x="4.9" y="11.5" width="2.9" height="2.5" fill="#a2a2a2"/><rect x="4.9" y="16" width="2.9" height="2.7" fill="#151515"/><path d="M9.4 8.6 H15 M9.4 13.2 H15 M9.4 17.8 H15" stroke="#777" stroke-width="1.3"/></svg>
<div class="l" style="left:786.4px;top:401px">禁用 IDN 编码</div>
<div class="l c" style="left:1279px;width:149px;top:401px">未配置</div>
<div class="l c" style="left:1429px;width:299px;top:401px">否</div>
<svg class="ic" style="left:761px;top:433.5px" width="20" height="22.8" viewBox="0 0 20 23" preserveAspectRatio="none"><path d="M1 1 H14.5 L19 5.5 V22 H1Z" fill="#fff" stroke="#b4b4b4" stroke-width="1.6"/><path d="M14.2 1.2 V5.8 H18.8" fill="none" stroke="#c4c4c4" stroke-width="1.2"/><rect x="4.9" y="6.9" width="2.9" height="2.7" fill="#151515"/><rect x="4.9" y="11.5" width="2.9" height="2.5" fill="#a2a2a2"/><rect x="4.9" y="16" width="2.9" height="2.7" fill="#151515"/><path d="M9.4 8.6 H15 M9.4 13.2 H15 M9.4 17.8 H15" stroke="#777" stroke-width="1.3"/></svg>
<div class="l" style="left:786.4px;top:432px">IDN 映射</div>
<div class="l c" style="left:1279px;width:149px;top:432px">未配置</div>
<div class="l c" style="left:1429px;width:299px;top:432px">否</div>
<svg class="ic" style="left:761px;top:465.0px" width="20" height="22.8" viewBox="0 0 20 23" preserveAspectRatio="none"><path d="M1 1 H14.5 L19 5.5 V22 H1Z" fill="#fff" stroke="#b4b4b4" stroke-width="1.6"/><path d="M14.2 1.2 V5.8 H18.8" fill="none" stroke="#c4c4c4" stroke-width="1.2"/><rect x="4.9" y="6.9" width="2.9" height="2.7" fill="#151515"/><rect x="4.9" y="11.5" width="2.9" height="2.5" fill="#a2a2a2"/><rect x="4.9" y="16" width="2.9" height="2.7" fill="#151515"/><path d="M9.4 8.6 H15 M9.4 13.2 H15 M9.4 17.8 H15" stroke="#777" stroke-width="1.3"/></svg>
<div class="l" style="left:786.4px;top:464px">配置多播 DNS (mDNS) 协议</div>
<div class="l c" style="left:1279px;width:149px;top:464px">未配置</div>
<div class="l c" style="left:1429px;width:299px;top:464px">否</div>
<svg class="ic" style="left:761px;top:496.5px" width="20" height="22.8" viewBox="0 0 20 23" preserveAspectRatio="none"><path d="M1 1 H14.5 L19 5.5 V22 H1Z" fill="#fff" stroke="#b4b4b4" stroke-width="1.6"/><path d="M14.2 1.2 V5.8 H18.8" fill="none" stroke="#c4c4c4" stroke-width="1.2"/><rect x="4.9" y="6.9" width="2.9" height="2.7" fill="#151515"/><rect x="4.9" y="11.5" width="2.9" height="2.5" fill="#a2a2a2"/><rect x="4.9" y="16" width="2.9" height="2.7" fill="#151515"/><path d="M9.4 8.6 H15 M9.4 13.2 H15 M9.4 17.8 H15" stroke="#777" stroke-width="1.3"/></svg>
<div class="l" style="left:786.4px;top:495px">DNS 服务器</div>
<div class="l c" style="left:1279px;width:149px;top:495px">未配置</div>
<div class="l c" style="left:1429px;width:299px;top:495px">否</div>
<svg class="ic" style="left:761px;top:528.0px" width="20" height="22.8" viewBox="0 0 20 23" preserveAspectRatio="none"><path d="M1 1 H14.5 L19 5.5 V22 H1Z" fill="#fff" stroke="#b4b4b4" stroke-width="1.6"/><path d="M14.2 1.2 V5.8 H18.8" fill="none" stroke="#c4c4c4" stroke-width="1.2"/><rect x="4.9" y="6.9" width="2.9" height="2.7" fill="#151515"/><rect x="4.9" y="11.5" width="2.9" height="2.5" fill="#a2a2a2"/><rect x="4.9" y="16" width="2.9" height="2.7" fill="#151515"/><path d="M9.4 8.6 H15 M9.4 13.2 H15 M9.4 17.8 H15" stroke="#777" stroke-width="1.3"/></svg>
<div class="l" style="left:786.4px;top:527px">配置 NetBIOS 设置</div>
<div class="l c" style="left:1279px;width:149px;top:527px">未配置</div>
<div class="l c" style="left:1429px;width:299px;top:527px">否</div>
<svg class="ic" style="left:761px;top:559.5px" width="20" height="22.8" viewBox="0 0 20 23" preserveAspectRatio="none"><path d="M1 1 H14.5 L19 5.5 V22 H1Z" fill="#fff" stroke="#b4b4b4" stroke-width="1.6"/><path d="M14.2 1.2 V5.8 H18.8" fill="none" stroke="#c4c4c4" stroke-width="1.2"/><rect x="4.9" y="6.9" width="2.9" height="2.7" fill="#151515"/><rect x="4.9" y="11.5" width="2.9" height="2.5" fill="#a2a2a2"/><rect x="4.9" y="16" width="2.9" height="2.7" fill="#151515"/><path d="M9.4 8.6 H15 M9.4 13.2 H15 M9.4 17.8 H15" stroke="#777" stroke-width="1.3"/></svg>
<div class="l" style="left:786.4px;top:558px">通过具有较高优先级的网络接收时优先选择 DNS 上的链路...</div>
<div class="l c" style="left:1279px;width:149px;top:558px">未配置</div>
<div class="l c" style="left:1429px;width:299px;top:558px">否</div>
<svg class="ic" style="left:761px;top:591.0px" width="20" height="22.8" viewBox="0 0 20 23" preserveAspectRatio="none"><path d="M1 1 H14.5 L19 5.5 V22 H1Z" fill="#fff" stroke="#b4b4b4" stroke-width="1.6"/><path d="M14.2 1.2 V5.8 H18.8" fill="none" stroke="#c4c4c4" stroke-width="1.2"/><rect x="4.9" y="6.9" width="2.9" height="2.7" fill="#151515"/><rect x="4.9" y="11.5" width="2.9" height="2.5" fill="#a2a2a2"/><rect x="4.9" y="16" width="2.9" height="2.7" fill="#151515"/><path d="M9.4 8.6 H15 M9.4 13.2 H15 M9.4 17.8 H15" stroke="#777" stroke-width="1.3"/></svg>
<div class="l" style="left:786.4px;top:590px">主 DNS 后缀</div>
<div class="l c" style="left:1279px;width:149px;top:590px">未配置</div>
<div class="l c" style="left:1429px;width:299px;top:590px">否</div>
<svg class="ic" style="left:761px;top:622.5px" width="20" height="22.8" viewBox="0 0 20 23" preserveAspectRatio="none"><path d="M1 1 H14.5 L19 5.5 V22 H1Z" fill="#fff" stroke="#b4b4b4" stroke-width="1.6"/><path d="M14.2 1.2 V5.8 H18.8" fill="none" stroke="#c4c4c4" stroke-width="1.2"/><rect x="4.9" y="6.9" width="2.9" height="2.7" fill="#151515"/><rect x="4.9" y="11.5" width="2.9" height="2.5" fill="#a2a2a2"/><rect x="4.9" y="16" width="2.9" height="2.7" fill="#151515"/><path d="M9.4 8.6 H15 M9.4 13.2 H15 M9.4 17.8 H15" stroke="#777" stroke-width="1.3"/></svg>
<div class="l" style="left:786.4px;top:621px">用连接特定的 DNS 后缀注册 DNS 记录</div>
<div class="l c" style="left:1279px;width:149px;top:621px">未配置</div>
<div class="l c" style="left:1429px;width:299px;top:621px">否</div>
<svg class="ic" style="left:761px;top:654.0px" width="20" height="22.8" viewBox="0 0 20 23" preserveAspectRatio="none"><path d="M1 1 H14.5 L19 5.5 V22 H1Z" fill="#fff" stroke="#b4b4b4" stroke-width="1.6"/><path d="M14.2 1.2 V5.8 H18.8" fill="none" stroke="#c4c4c4" stroke-width="1.2"/><rect x="4.9" y="6.9" width="2.9" height="2.7" fill="#151515"/><rect x="4.9" y="11.5" width="2.9" height="2.5" fill="#a2a2a2"/><rect x="4.9" y="16" width="2.9" height="2.7" fill="#151515"/><path d="M9.4 8.6 H15 M9.4 13.2 H15 M9.4 17.8 H15" stroke="#777" stroke-width="1.3"/></svg>
<div class="l" style="left:786.4px;top:653px">注册 <span style="letter-spacing:-1.4px">PTR</span> 记录</div>
<div class="l c" style="left:1279px;width:149px;top:653px">未配置</div>
<div class="l c" style="left:1429px;width:299px;top:653px">否</div>
<svg class="ic" style="left:761px;top:685.5px" width="20" height="22.8" viewBox="0 0 20 23" preserveAspectRatio="none"><path d="M1 1 H14.5 L19 5.5 V22 H1Z" fill="#fff" stroke="#b4b4b4" stroke-width="1.6"/><path d="M14.2 1.2 V5.8 H18.8" fill="none" stroke="#c4c4c4" stroke-width="1.2"/><rect x="4.9" y="6.9" width="2.9" height="2.7" fill="#151515"/><rect x="4.9" y="11.5" width="2.9" height="2.5" fill="#a2a2a2"/><rect x="4.9" y="16" width="2.9" height="2.7" fill="#151515"/><path d="M9.4 8.6 H15 M9.4 13.2 H15 M9.4 17.8 H15" stroke="#777" stroke-width="1.3"/></svg>
<div class="l" style="left:786.4px;top:684px">动态更新</div>
<div class="l c" style="left:1279px;width:149px;top:684px">未配置</div>
<div class="l c" style="left:1429px;width:299px;top:684px">否</div>
<svg class="ic" style="left:761px;top:717.0px" width="20" height="22.8" viewBox="0 0 20 23" preserveAspectRatio="none"><path d="M1 1 H14.5 L19 5.5 V22 H1Z" fill="#fff" stroke="#b4b4b4" stroke-width="1.6"/><path d="M14.2 1.2 V5.8 H18.8" fill="none" stroke="#c4c4c4" stroke-width="1.2"/><rect x="4.9" y="6.9" width="2.9" height="2.7" fill="#151515"/><rect x="4.9" y="11.5" width="2.9" height="2.5" fill="#a2a2a2"/><rect x="4.9" y="16" width="2.9" height="2.7" fill="#151515"/><path d="M9.4 8.6 H15 M9.4 13.2 H15 M9.4 17.8 H15" stroke="#777" stroke-width="1.3"/></svg>
<div class="l" style="left:786.4px;top:716px">在冲突时替换地址</div>
<div class="l c" style="left:1279px;width:149px;top:716px">未配置</div>
<div class="l c" style="left:1429px;width:299px;top:716px">否</div>
<svg class="ic" style="left:761px;top:748.5px" width="20" height="22.8" viewBox="0 0 20 23" preserveAspectRatio="none"><path d="M1 1 H14.5 L19 5.5 V22 H1Z" fill="#fff" stroke="#b4b4b4" stroke-width="1.6"/><path d="M14.2 1.2 V5.8 H18.8" fill="none" stroke="#c4c4c4" stroke-width="1.2"/><rect x="4.9" y="6.9" width="2.9" height="2.7" fill="#151515"/><rect x="4.9" y="11.5" width="2.9" height="2.5" fill="#a2a2a2"/><rect x="4.9" y="16" width="2.9" height="2.7" fill="#151515"/><path d="M9.4 8.6 H15 M9.4 13.2 H15 M9.4 17.8 H15" stroke="#777" stroke-width="1.3"/></svg>
<div class="l" style="left:786.4px;top:747px">注册刷新间隔</div>
<div class="l c" style="left:1279px;width:149px;top:747px">未配置</div>
<div class="l c" style="left:1429px;width:299px;top:747px">否</div>
<svg class="ic" style="left:761px;top:780.0px" width="20" height="22.8" viewBox="0 0 20 23" preserveAspectRatio="none"><path d="M1 1 H14.5 L19 5.5 V22 H1Z" fill="#fff" stroke="#b4b4b4" stroke-width="1.6"/><path d="M14.2 1.2 V5.8 H18.8" fill="none" stroke="#c4c4c4" stroke-width="1.2"/><rect x="4.9" y="6.9" width="2.9" height="2.7" fill="#151515"/><rect x="4.9" y="11.5" width="2.9" height="2.5" fill="#a2a2a2"/><rect x="4.9" y="16" width="2.9" height="2.7" fill="#151515"/><path d="M9.4 8.6 H15 M9.4 13.2 H15 M9.4 17.8 H15" stroke="#777" stroke-width="1.3"/></svg>
<div class="l" style="left:786.4px;top:779px">A 和 <span style="letter-spacing:-1.4px">PTR</span> 记录的 <span style="letter-spacing:-0.6px">TTL</span> 值</div>
<div class="l c" style="left:1279px;width:149px;top:779px">未配置</div>
<div class="l c" style="left:1429px;width:299px;top:779px">否</div>
<svg class="ic" style="left:761px;top:811.5px" width="20" height="22.8" viewBox="0 0 20 23" preserveAspectRatio="none"><path d="M1 1 H14.5 L19 5.5 V22 H1Z" fill="#fff" stroke="#b4b4b4" stroke-width="1.6"/><path d="M14.2 1.2 V5.8 H18.8" fill="none" stroke="#c4c4c4" stroke-width="1.2"/><rect x="4.9" y="6.9" width="2.9" height="2.7" fill="#151515"/><rect x="4.9" y="11.5" width="2.9" height="2.5" fill="#a2a2a2"/><rect x="4.9" y="16" width="2.9" height="2.7" fill="#151515"/><path d="M9.4 8.6 H15 M9.4 13.2 H15 M9.4 17.8 H15" stroke="#777" stroke-width="1.3"/></svg>
<div class="l" style="left:786.4px;top:810px">DNS 后缀搜索列表</div>
<div class="l c" style="left:1279px;width:149px;top:810px">未配置</div>
<div class="l c" style="left:1429px;width:299px;top:810px">否</div>
<div class="lsel" style="left:784px;top:838.8px;width:945px;height:31.2px"></div>
<svg class="ic" style="left:761px;top:843.0px" width="20" height="22.8" viewBox="0 0 20 23" preserveAspectRatio="none"><path d="M1 1 H14.5 L19 5.5 V22 H1Z" fill="#fff" stroke="#b4b4b4" stroke-width="1.6"/><path d="M14.2 1.2 V5.8 H18.8" fill="none" stroke="#c4c4c4" stroke-width="1.2"/><rect x="4.9" y="6.9" width="2.9" height="2.7" fill="#151515"/><rect x="4.9" y="11.5" width="2.9" height="2.5" fill="#a2a2a2"/><rect x="4.9" y="16" width="2.9" height="2.7" fill="#151515"/><path d="M9.4 8.6 H15 M9.4 13.2 H15 M9.4 17.8 H15" stroke="#777" stroke-width="1.3"/></svg>
<div class="l w" style="left:786.4px;top:842px">禁用智能多宿主名称解析</div>
<div class="l w c" style="left:1279px;width:149px;top:842px">已启用</div>
<div class="l w c" style="left:1429px;width:299px;top:842px">否</div>
<svg class="ic" style="left:761px;top:874.5px" width="20" height="22.8" viewBox="0 0 20 23" preserveAspectRatio="none"><path d="M1 1 H14.5 L19 5.5 V22 H1Z" fill="#fff" stroke="#b4b4b4" stroke-width="1.6"/><path d="M14.2 1.2 V5.8 H18.8" fill="none" stroke="#c4c4c4" stroke-width="1.2"/><rect x="4.9" y="6.9" width="2.9" height="2.7" fill="#151515"/><rect x="4.9" y="11.5" width="2.9" height="2.5" fill="#a2a2a2"/><rect x="4.9" y="16" width="2.9" height="2.7" fill="#151515"/><path d="M9.4 8.6 H15 M9.4 13.2 H15 M9.4 17.8 H15" stroke="#777" stroke-width="1.3"/></svg>
<div class="l" style="left:786.4px;top:873px">禁用智能协议重新排序</div>
<div class="l c" style="left:1279px;width:149px;top:873px">未配置</div>
<div class="l c" style="left:1429px;width:299px;top:873px">否</div>
<svg class="ic" style="left:761px;top:906.0px" width="20" height="22.8" viewBox="0 0 20 23" preserveAspectRatio="none"><path d="M1 1 H14.5 L19 5.5 V22 H1Z" fill="#fff" stroke="#b4b4b4" stroke-width="1.6"/><path d="M14.2 1.2 V5.8 H18.8" fill="none" stroke="#c4c4c4" stroke-width="1.2"/><rect x="4.9" y="6.9" width="2.9" height="2.7" fill="#151515"/><rect x="4.9" y="11.5" width="2.9" height="2.5" fill="#a2a2a2"/><rect x="4.9" y="16" width="2.9" height="2.7" fill="#151515"/><path d="M9.4 8.6 H15 M9.4 13.2 H15 M9.4 17.8 H15" stroke="#777" stroke-width="1.3"/></svg>
<div class="l" style="left:786.4px;top:905px">关闭默认 IPv6 DNS 服务器</div>
<div class="l c" style="left:1279px;width:149px;top:905px">未配置</div>
<div class="l c" style="left:1429px;width:299px;top:905px">否</div>
<svg class="ic" style="left:761px;top:937.5px" width="20" height="22.8" viewBox="0 0 20 23" preserveAspectRatio="none"><path d="M1 1 H14.5 L19 5.5 V22 H1Z" fill="#fff" stroke="#b4b4b4" stroke-width="1.6"/><path d="M14.2 1.2 V5.8 H18.8" fill="none" stroke="#c4c4c4" stroke-width="1.2"/><rect x="4.9" y="6.9" width="2.9" height="2.7" fill="#151515"/><rect x="4.9" y="11.5" width="2.9" height="2.5" fill="#a2a2a2"/><rect x="4.9" y="16" width="2.9" height="2.7" fill="#151515"/><path d="M9.4 8.6 H15 M9.4 13.2 H15 M9.4 17.8 H15" stroke="#777" stroke-width="1.3"/></svg>
<div class="l" style="left:786.4px;top:936px">更新安全等级</div>
<div class="l c" style="left:1279px;width:149px;top:936px">未配置</div>
<div class="l c" style="left:1429px;width:299px;top:936px">否</div>
<svg class="ic" style="left:761px;top:969.0px" width="20" height="22.8" viewBox="0 0 20 23" preserveAspectRatio="none"><path d="M1 1 H14.5 L19 5.5 V22 H1Z" fill="#fff" stroke="#b4b4b4" stroke-width="1.6"/><path d="M14.2 1.2 V5.8 H18.8" fill="none" stroke="#c4c4c4" stroke-width="1.2"/><rect x="4.9" y="6.9" width="2.9" height="2.7" fill="#151515"/><rect x="4.9" y="11.5" width="2.9" height="2.5" fill="#a2a2a2"/><rect x="4.9" y="16" width="2.9" height="2.7" fill="#151515"/><path d="M9.4 8.6 H15 M9.4 13.2 H15 M9.4 17.8 H15" stroke="#777" stroke-width="1.3"/></svg>
<div class="l" style="left:786.4px;top:968px">更新顶级域区域</div>
<div class="l c" style="left:1279px;width:149px;top:968px">未配置</div>
<div class="l c" style="left:1429px;width:299px;top:968px">否</div>
<svg class="ic" style="left:761px;top:1000.5px" width="20" height="22.8" viewBox="0 0 20 23" preserveAspectRatio="none"><path d="M1 1 H14.5 L19 5.5 V22 H1Z" fill="#fff" stroke="#b4b4b4" stroke-width="1.6"/><path d="M14.2 1.2 V5.8 H18.8" fill="none" stroke="#c4c4c4" stroke-width="1.2"/><rect x="4.9" y="6.9" width="2.9" height="2.7" fill="#151515"/><rect x="4.9" y="11.5" width="2.9" height="2.5" fill="#a2a2a2"/><rect x="4.9" y="16" width="2.9" height="2.7" fill="#151515"/><path d="M9.4 8.6 H15 M9.4 13.2 H15 M9.4 17.8 H15" stroke="#777" stroke-width="1.3"/></svg>
<div class="l" style="left:786.4px;top:999px">主 DNS 后缀传递</div>
<div class="l c" style="left:1279px;width:149px;top:999px">未配置</div>
<div class="l c" style="left:1429px;width:299px;top:999px">否</div>
<svg class="ic" style="left:761px;top:1032.0px" width="20" height="22.8" viewBox="0 0 20 23" preserveAspectRatio="none"><path d="M1 1 H14.5 L19 5.5 V22 H1Z" fill="#fff" stroke="#b4b4b4" stroke-width="1.6"/><path d="M14.2 1.2 V5.8 H18.8" fill="none" stroke="#c4c4c4" stroke-width="1.2"/><rect x="4.9" y="6.9" width="2.9" height="2.7" fill="#151515"/><rect x="4.9" y="11.5" width="2.9" height="2.5" fill="#a2a2a2"/><rect x="4.9" y="16" width="2.9" height="2.7" fill="#151515"/><path d="M9.4 8.6 H15 M9.4 13.2 H15 M9.4 17.8 H15" stroke="#777" stroke-width="1.3"/></svg>
<div class="l" style="left:786.4px;top:1031px">关闭多播名称解析</div>
<div class="l c" style="left:1279px;width:149px;top:1031px">未配置</div>
<div class="l c" style="left:1429px;width:299px;top:1031px">否</div>
<div style="left:432px;top:1425px;width:1670px;height:1.4px;background:#ababab"></div><svg class="ic" style="left:430px;top:1422px" width="140" height="36" viewBox="0 0 140 36"><path d="M66.5 3.6 H121 L110 33.2 H68.5 L62.6 19.6Z" fill="#f0f0f0"/><path d="M62.8 19.8 L68.6 33.2 H109.6" fill="none" stroke="#8a8a8a" stroke-width="1"/><path d="M120.4 3.6 L109.4 33.2" stroke="#6e6e6e" stroke-width="2"/><path d="M3.4 2.4 L14.6 33.2 H55.6 L66.4 3.2Z" fill="#fff"/><path d="M3.4 3 L14.6 33.2 H55.6 L66.4 3.6" fill="none" stroke="#6e6e6e" stroke-width="1.1"/></svg>
<div class="t" style="left:447.6px;top:1429px;font-size:18px">扩展</div>
<div class="t" style="left:501.6px;top:1429px;font-size:18px">标准</div>
<div id="status" style="top:1457px"></div>
<div class="ssep" style="left:1772px"></div><div class="ssep" style="left:1972px"></div>
<div class="t" style="left:3px;top:1463px">27 个设置</div>
<svg class="ic" style="left:0;top:1479px" width="10" height="10" viewBox="0 0 10 10"><path d="M0 0 Q0 10 10 10 H0Z" fill="#1c4b5c"/></svg>
<svg class="ic" style="left:2092px;top:1479px" width="10" height="10" viewBox="0 0 10 10"><path d="M10 0 Q10 10 0 10 H10Z" fill="#1c4b5c"/></svg>
</body></html>
